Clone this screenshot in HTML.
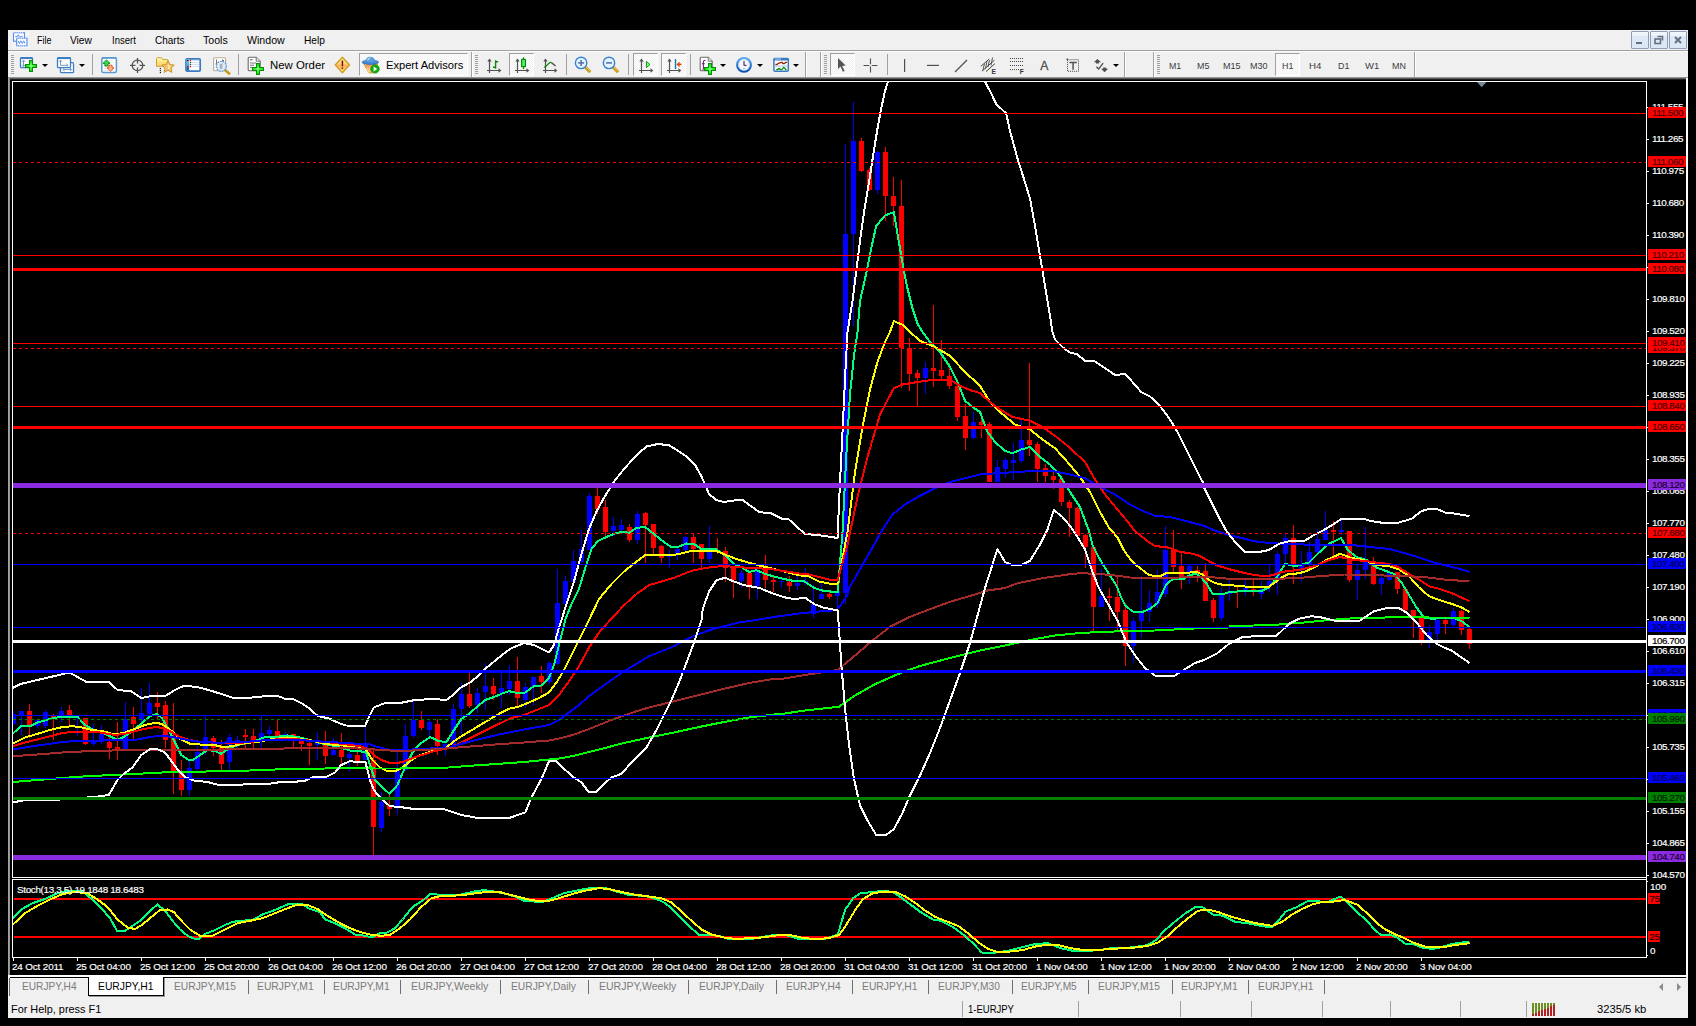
<!DOCTYPE html><html><head><meta charset="utf-8"><title>EURJPY,H1</title><style>
html,body{margin:0;padding:0;background:#000;}
body{width:1696px;height:1026px;position:relative;overflow:hidden;font-family:"Liberation Sans",sans-serif;font-size:11px;color:#000;}
.abs{position:absolute;}
#menubar{left:8px;top:30px;width:1680px;height:20px;background:#f0f0f0;}
#mline1{left:8px;top:50px;width:1680px;height:1px;background:#a0a0a0;}
#mline2{left:8px;top:51px;width:1680px;height:1px;background:#fcfcfc;}
#toolbar{left:8px;top:52px;width:1680px;height:25px;background:#f0f0f0;}
#tbshadow{left:8px;top:77px;width:1680px;height:3px;background:linear-gradient(#b4b4b4,#5a5a5a 50%,#000);}
#ledge{left:8px;top:78px;width:2px;height:897px;background:linear-gradient(90deg,#a8a8a8,#8c8c8c);}
#redge{left:1686px;top:78px;width:2px;height:897px;background:#fff;}
#tabbar{left:8px;top:975px;width:1680px;height:22px;background:#f0f0f0;border-top:2px solid #fff;box-sizing:border-box;}
#tabhi{left:10px;top:978px;width:1676px;height:1px;background:#fbfbfb;}
#tabtop{left:10px;top:977px;width:1676px;height:1px;background:#000;}
#status{left:8px;top:997px;width:1680px;height:21px;background:#f0f0f0;}
.mn{font-size:10.6px;}
.mi{position:absolute;top:34px;height:13px;line-height:13px;white-space:nowrap;font-size:11px;}
.tt{position:absolute;white-space:nowrap;line-height:13px;height:13px;transform-origin:0 0;}
.tab{color:#7b7b7b;top:980px;font-size:11px;}
.sep{position:absolute;width:1px;background:#a0a0a0;}
.sepw{position:absolute;width:1px;background:#fff;}
.grip{position:absolute;width:3px;height:20px;background:repeating-linear-gradient(#a0a0a0 0 1px,#f0f0f0 1px 2px);}
.pressed{position:absolute;box-sizing:border-box;border:1px solid;border-color:#a0a0a0 #fff #fff #a0a0a0;background:#f0f0f0 conic-gradient(#fff 25%,#f0f0f0 0 50%,#fff 0 75%,#f0f0f0 0) 0 0/2px 2px;}
.dd{position:absolute;width:0;height:0;border-left:3px solid transparent;border-right:3px solid transparent;border-top:3px solid #000;}
.per{position:absolute;top:59px;font-size:9.5px;color:#3c3c3c;line-height:13px;white-space:nowrap;}
.wb{position:absolute;top:31px;width:18px;height:18px;box-sizing:border-box;border:1px solid #8e9db3;background:linear-gradient(#f2f7fc 0,#eaf1fa 25%,#dde9f7 26%,#dbe7f5 100%);border-radius:1px;}
svg.ic{position:absolute;overflow:visible;}
</style></head><body>
<svg id="chart" width="1696" height="1026" viewBox="0 0 1696 1026" shape-rendering="crispEdges" style="position:absolute;left:0;top:0" font-family="Liberation Sans, sans-serif" font-size="9.9px" letter-spacing="-0.15" stroke-width="0.18" paint-order="stroke"><defs><clipPath id="cm"><rect x="13" y="82" width="1633" height="795"/></clipPath><clipPath id="cs"><rect x="13" y="880" width="1633" height="77"/></clipPath></defs><g clip-path="url(#cm)">
<rect x="13" y="711" width="1" height="14" fill="#0000ff"/><rect x="11" y="714" width="5" height="10" fill="#0000ff"/>
<rect x="21" y="711" width="1" height="24" fill="#0000ff"/><rect x="19" y="711" width="5" height="5" fill="#0000ff"/>
<rect x="29" y="704" width="1" height="34" fill="#ff0000"/><rect x="27" y="711" width="5" height="14" fill="#ff0000"/>
<rect x="37" y="719" width="1" height="9" fill="#0000ff"/><rect x="35" y="720" width="5" height="6" fill="#0000ff"/>
<rect x="45" y="710" width="1" height="18" fill="#0000ff"/><rect x="43" y="712" width="5" height="14" fill="#0000ff"/>
<rect x="53" y="714" width="1" height="26" fill="#ff0000"/><rect x="51" y="715" width="5" height="4" fill="#ff0000"/>
<rect x="61" y="707" width="1" height="15" fill="#0000ff"/><rect x="59" y="711" width="5" height="7" fill="#0000ff"/>
<rect x="69" y="705" width="1" height="20" fill="#ff0000"/><rect x="67" y="710" width="5" height="6" fill="#ff0000"/>
<rect x="77" y="716" width="1" height="20" fill="#0000ff"/><rect x="75" y="717" width="5" height="1" fill="#0000ff"/>
<rect x="85" y="718" width="1" height="27" fill="#ff0000"/><rect x="83" y="718" width="5" height="26" fill="#ff0000"/>
<rect x="93" y="724" width="1" height="22" fill="#0000ff"/><rect x="91" y="740" width="5" height="4" fill="#0000ff"/>
<rect x="101" y="725" width="1" height="19" fill="#0000ff"/><rect x="99" y="734" width="5" height="8" fill="#0000ff"/>
<rect x="109" y="735" width="1" height="24" fill="#ff0000"/><rect x="107" y="742" width="5" height="6" fill="#ff0000"/>
<rect x="117" y="722" width="1" height="38" fill="#ff0000"/><rect x="115" y="747" width="5" height="4" fill="#ff0000"/>
<rect x="125" y="702" width="1" height="48" fill="#0000ff"/><rect x="123" y="719" width="5" height="31" fill="#0000ff"/>
<rect x="133" y="707" width="1" height="32" fill="#ff0000"/><rect x="131" y="717" width="5" height="7" fill="#ff0000"/>
<rect x="141" y="688" width="1" height="42" fill="#0000ff"/><rect x="139" y="713" width="5" height="7" fill="#0000ff"/>
<rect x="149" y="683" width="1" height="32" fill="#0000ff"/><rect x="147" y="703" width="5" height="11" fill="#0000ff"/>
<rect x="157" y="692" width="1" height="28" fill="#ff0000"/><rect x="155" y="703" width="5" height="4" fill="#ff0000"/>
<rect x="165" y="701" width="1" height="47" fill="#ff0000"/><rect x="163" y="705" width="5" height="35" fill="#ff0000"/>
<rect x="173" y="703" width="1" height="91" fill="#ff0000"/><rect x="171" y="738" width="5" height="34" fill="#ff0000"/>
<rect x="181" y="760" width="1" height="36" fill="#ff0000"/><rect x="179" y="772" width="5" height="18" fill="#ff0000"/>
<rect x="189" y="760" width="1" height="36" fill="#0000ff"/><rect x="187" y="768" width="5" height="22" fill="#0000ff"/>
<rect x="197" y="746" width="1" height="25" fill="#0000ff"/><rect x="195" y="752" width="5" height="17" fill="#0000ff"/>
<rect x="205" y="715" width="1" height="40" fill="#0000ff"/><rect x="203" y="737" width="5" height="12" fill="#0000ff"/>
<rect x="213" y="736" width="1" height="20" fill="#ff0000"/><rect x="211" y="738" width="5" height="10" fill="#ff0000"/>
<rect x="221" y="740" width="1" height="30" fill="#ff0000"/><rect x="219" y="746" width="5" height="18" fill="#ff0000"/>
<rect x="229" y="734" width="1" height="36" fill="#0000ff"/><rect x="227" y="737" width="5" height="25" fill="#0000ff"/>
<rect x="237" y="736" width="1" height="14" fill="#0000ff"/><rect x="235" y="740" width="5" height="2" fill="#0000ff"/>
<rect x="245" y="729" width="1" height="19" fill="#ff0000"/><rect x="243" y="735" width="5" height="2" fill="#ff0000"/>
<rect x="253" y="729" width="1" height="19" fill="#ff0000"/><rect x="251" y="736" width="5" height="4" fill="#ff0000"/>
<rect x="261" y="715" width="1" height="33" fill="#0000ff"/><rect x="259" y="733" width="5" height="6" fill="#0000ff"/>
<rect x="269" y="726" width="1" height="10" fill="#0000ff"/><rect x="267" y="730" width="5" height="4" fill="#0000ff"/>
<rect x="277" y="720" width="1" height="18" fill="#ff0000"/><rect x="275" y="731" width="5" height="5" fill="#ff0000"/>
<rect x="285" y="732" width="1" height="7" fill="#0000ff"/><rect x="283" y="734" width="5" height="2" fill="#0000ff"/>
<rect x="293" y="734" width="1" height="14" fill="#ff0000"/><rect x="291" y="734" width="5" height="4" fill="#ff0000"/>
<rect x="301" y="738" width="1" height="13" fill="#ff0000"/><rect x="299" y="741" width="5" height="3" fill="#ff0000"/>
<rect x="309" y="742" width="1" height="23" fill="#ff0000"/><rect x="307" y="743" width="5" height="3" fill="#ff0000"/>
<rect x="317" y="732" width="1" height="28" fill="#0000ff"/><rect x="315" y="742" width="5" height="3" fill="#0000ff"/>
<rect x="325" y="731" width="1" height="33" fill="#ff0000"/><rect x="323" y="743" width="5" height="13" fill="#ff0000"/>
<rect x="333" y="738" width="1" height="18" fill="#0000ff"/><rect x="331" y="750" width="5" height="5" fill="#0000ff"/>
<rect x="341" y="733" width="1" height="31" fill="#ff0000"/><rect x="339" y="750" width="5" height="7" fill="#ff0000"/>
<rect x="349" y="752" width="1" height="20" fill="#0000ff"/><rect x="347" y="754" width="5" height="4" fill="#0000ff"/>
<rect x="357" y="745" width="1" height="21" fill="#ff0000"/><rect x="355" y="755" width="5" height="6" fill="#ff0000"/>
<rect x="365" y="726" width="1" height="34" fill="#0000ff"/><rect x="363" y="744" width="5" height="16" fill="#0000ff"/>
<rect x="373" y="749" width="1" height="106" fill="#ff0000"/><rect x="371" y="760" width="5" height="67" fill="#ff0000"/>
<rect x="381" y="792" width="1" height="40" fill="#0000ff"/><rect x="379" y="802" width="5" height="26" fill="#0000ff"/>
<rect x="389" y="792" width="1" height="24" fill="#ff0000"/><rect x="387" y="805" width="5" height="4" fill="#ff0000"/>
<rect x="397" y="752" width="1" height="63" fill="#0000ff"/><rect x="395" y="770" width="5" height="38" fill="#0000ff"/>
<rect x="405" y="724" width="1" height="47" fill="#0000ff"/><rect x="403" y="736" width="5" height="34" fill="#0000ff"/>
<rect x="413" y="700" width="1" height="38" fill="#0000ff"/><rect x="411" y="720" width="5" height="16" fill="#0000ff"/>
<rect x="421" y="711" width="1" height="19" fill="#ff0000"/><rect x="419" y="720" width="5" height="8" fill="#ff0000"/>
<rect x="429" y="720" width="1" height="18" fill="#0000ff"/><rect x="427" y="722" width="5" height="8" fill="#0000ff"/>
<rect x="437" y="719" width="1" height="36" fill="#ff0000"/><rect x="435" y="724" width="5" height="22" fill="#ff0000"/>
<rect x="445" y="740" width="1" height="16" fill="#0000ff"/><rect x="443" y="744" width="5" height="5" fill="#0000ff"/>
<rect x="453" y="704" width="1" height="41" fill="#0000ff"/><rect x="451" y="709" width="5" height="36" fill="#0000ff"/>
<rect x="461" y="683" width="1" height="51" fill="#0000ff"/><rect x="459" y="694" width="5" height="15" fill="#0000ff"/>
<rect x="469" y="673" width="1" height="35" fill="#ff0000"/><rect x="467" y="694" width="5" height="12" fill="#ff0000"/>
<rect x="477" y="688" width="1" height="25" fill="#0000ff"/><rect x="475" y="693" width="5" height="12" fill="#0000ff"/>
<rect x="485" y="663" width="1" height="47" fill="#0000ff"/><rect x="483" y="686" width="5" height="6" fill="#0000ff"/>
<rect x="493" y="678" width="1" height="22" fill="#ff0000"/><rect x="491" y="686" width="5" height="8" fill="#ff0000"/>
<rect x="501" y="672" width="1" height="36" fill="#0000ff"/><rect x="499" y="688" width="5" height="5" fill="#0000ff"/>
<rect x="509" y="665" width="1" height="30" fill="#0000ff"/><rect x="507" y="681" width="5" height="8" fill="#0000ff"/>
<rect x="517" y="657" width="1" height="49" fill="#ff0000"/><rect x="515" y="681" width="5" height="17" fill="#ff0000"/>
<rect x="525" y="683" width="1" height="25" fill="#0000ff"/><rect x="523" y="687" width="5" height="13" fill="#0000ff"/>
<rect x="533" y="676" width="1" height="30" fill="#0000ff"/><rect x="531" y="677" width="5" height="10" fill="#0000ff"/>
<rect x="541" y="666" width="1" height="27" fill="#ff0000"/><rect x="539" y="676" width="5" height="6" fill="#ff0000"/>
<rect x="549" y="661" width="1" height="23" fill="#0000ff"/><rect x="547" y="663" width="5" height="19" fill="#0000ff"/>
<rect x="557" y="569" width="1" height="96" fill="#0000ff"/><rect x="555" y="603" width="5" height="61" fill="#0000ff"/>
<rect x="565" y="576" width="1" height="29" fill="#0000ff"/><rect x="563" y="581" width="5" height="23" fill="#0000ff"/>
<rect x="573" y="550" width="1" height="33" fill="#0000ff"/><rect x="571" y="561" width="5" height="21" fill="#0000ff"/>
<rect x="581" y="530" width="1" height="33" fill="#0000ff"/><rect x="579" y="549" width="5" height="13" fill="#0000ff"/>
<rect x="589" y="493" width="1" height="57" fill="#0000ff"/><rect x="587" y="496" width="5" height="54" fill="#0000ff"/>
<rect x="597" y="488" width="1" height="26" fill="#ff0000"/><rect x="595" y="496" width="5" height="13" fill="#ff0000"/>
<rect x="605" y="500" width="1" height="36" fill="#ff0000"/><rect x="603" y="507" width="5" height="25" fill="#ff0000"/>
<rect x="613" y="517" width="1" height="19" fill="#0000ff"/><rect x="611" y="526" width="5" height="5" fill="#0000ff"/>
<rect x="621" y="519" width="1" height="13" fill="#0000ff"/><rect x="619" y="525" width="5" height="5" fill="#0000ff"/>
<rect x="629" y="524" width="1" height="18" fill="#ff0000"/><rect x="627" y="527" width="5" height="13" fill="#ff0000"/>
<rect x="637" y="511" width="1" height="33" fill="#0000ff"/><rect x="635" y="514" width="5" height="26" fill="#0000ff"/>
<rect x="645" y="512" width="1" height="51" fill="#ff0000"/><rect x="643" y="513" width="5" height="12" fill="#ff0000"/>
<rect x="653" y="524" width="1" height="30" fill="#ff0000"/><rect x="651" y="524" width="5" height="24" fill="#ff0000"/>
<rect x="661" y="545" width="1" height="18" fill="#ff0000"/><rect x="659" y="546" width="5" height="12" fill="#ff0000"/>
<rect x="669" y="550" width="1" height="18" fill="#0000ff"/><rect x="667" y="555" width="5" height="2" fill="#0000ff"/>
<rect x="677" y="548" width="1" height="12" fill="#0000ff"/><rect x="675" y="549" width="5" height="5" fill="#0000ff"/>
<rect x="685" y="536" width="1" height="16" fill="#0000ff"/><rect x="683" y="537" width="5" height="13" fill="#0000ff"/>
<rect x="693" y="534" width="1" height="29" fill="#ff0000"/><rect x="691" y="537" width="5" height="12" fill="#ff0000"/>
<rect x="701" y="544" width="1" height="24" fill="#ff0000"/><rect x="699" y="544" width="5" height="15" fill="#ff0000"/>
<rect x="709" y="526" width="1" height="37" fill="#0000ff"/><rect x="707" y="552" width="5" height="7" fill="#0000ff"/>
<rect x="717" y="538" width="1" height="16" fill="#ff0000"/><rect x="715" y="550" width="5" height="2" fill="#ff0000"/>
<rect x="725" y="547" width="1" height="35" fill="#ff0000"/><rect x="723" y="551" width="5" height="17" fill="#ff0000"/>
<rect x="733" y="566" width="1" height="32" fill="#ff0000"/><rect x="731" y="568" width="5" height="12" fill="#ff0000"/>
<rect x="741" y="570" width="1" height="18" fill="#0000ff"/><rect x="739" y="573" width="5" height="8" fill="#0000ff"/>
<rect x="749" y="572" width="1" height="27" fill="#ff0000"/><rect x="747" y="573" width="5" height="13" fill="#ff0000"/>
<rect x="757" y="564" width="1" height="35" fill="#0000ff"/><rect x="755" y="571" width="5" height="15" fill="#0000ff"/>
<rect x="765" y="555" width="1" height="33" fill="#ff0000"/><rect x="763" y="568" width="5" height="12" fill="#ff0000"/>
<rect x="773" y="576" width="1" height="16" fill="#ff0000"/><rect x="771" y="580" width="5" height="2" fill="#ff0000"/>
<rect x="781" y="579" width="1" height="9" fill="#0000ff"/><rect x="779" y="581" width="5" height="1" fill="#0000ff"/>
<rect x="789" y="576" width="1" height="16" fill="#ff0000"/><rect x="787" y="582" width="5" height="4" fill="#ff0000"/>
<rect x="797" y="575" width="1" height="15" fill="#0000ff"/><rect x="795" y="583" width="5" height="3" fill="#0000ff"/>
<rect x="805" y="568" width="1" height="17" fill="#0000ff"/><rect x="803" y="581" width="5" height="2" fill="#0000ff"/>
<rect x="813" y="585" width="1" height="33" fill="#0000ff"/><rect x="811" y="604" width="5" height="10" fill="#0000ff"/>
<rect x="821" y="583" width="1" height="16" fill="#0000ff"/><rect x="819" y="594" width="5" height="5" fill="#0000ff"/>
<rect x="829" y="592" width="1" height="7" fill="#ff0000"/><rect x="827" y="594" width="5" height="3" fill="#ff0000"/>
<rect x="837" y="589" width="1" height="23" fill="#0000ff"/><rect x="835" y="591" width="5" height="5" fill="#0000ff"/>
<rect x="845" y="144" width="1" height="460" fill="#0000ff"/><rect x="843" y="234" width="5" height="359" fill="#0000ff"/>
<rect x="853" y="102" width="1" height="224" fill="#0000ff"/><rect x="851" y="141" width="5" height="93" fill="#0000ff"/>
<rect x="861" y="138" width="1" height="34" fill="#ff0000"/><rect x="859" y="141" width="5" height="30" fill="#ff0000"/>
<rect x="869" y="168" width="1" height="23" fill="#ff0000"/><rect x="867" y="170" width="5" height="20" fill="#ff0000"/>
<rect x="877" y="151" width="1" height="43" fill="#0000ff"/><rect x="875" y="152" width="5" height="38" fill="#0000ff"/>
<rect x="885" y="147" width="1" height="74" fill="#ff0000"/><rect x="883" y="152" width="5" height="44" fill="#ff0000"/>
<rect x="893" y="177" width="1" height="49" fill="#ff0000"/><rect x="891" y="196" width="5" height="10" fill="#ff0000"/>
<rect x="901" y="180" width="1" height="208" fill="#ff0000"/><rect x="899" y="206" width="5" height="142" fill="#ff0000"/>
<rect x="909" y="338" width="1" height="53" fill="#ff0000"/><rect x="907" y="348" width="5" height="26" fill="#ff0000"/>
<rect x="917" y="370" width="1" height="36" fill="#ff0000"/><rect x="915" y="373" width="5" height="5" fill="#ff0000"/>
<rect x="925" y="362" width="1" height="32" fill="#0000ff"/><rect x="923" y="368" width="5" height="10" fill="#0000ff"/>
<rect x="933" y="305" width="1" height="82" fill="#ff0000"/><rect x="931" y="368" width="5" height="3" fill="#ff0000"/>
<rect x="941" y="340" width="1" height="40" fill="#ff0000"/><rect x="939" y="370" width="5" height="6" fill="#ff0000"/>
<rect x="949" y="363" width="1" height="26" fill="#ff0000"/><rect x="947" y="376" width="5" height="10" fill="#ff0000"/>
<rect x="957" y="379" width="1" height="42" fill="#ff0000"/><rect x="955" y="386" width="5" height="31" fill="#ff0000"/>
<rect x="965" y="404" width="1" height="46" fill="#ff0000"/><rect x="963" y="416" width="5" height="22" fill="#ff0000"/>
<rect x="973" y="412" width="1" height="27" fill="#0000ff"/><rect x="971" y="422" width="5" height="16" fill="#0000ff"/>
<rect x="981" y="412" width="1" height="26" fill="#ff0000"/><rect x="979" y="422" width="5" height="3" fill="#ff0000"/>
<rect x="989" y="422" width="1" height="60" fill="#ff0000"/><rect x="987" y="424" width="5" height="58" fill="#ff0000"/>
<rect x="997" y="460" width="1" height="22" fill="#0000ff"/><rect x="995" y="467" width="5" height="15" fill="#0000ff"/>
<rect x="1005" y="458" width="1" height="20" fill="#0000ff"/><rect x="1003" y="460" width="5" height="9" fill="#0000ff"/>
<rect x="1013" y="443" width="1" height="37" fill="#0000ff"/><rect x="1011" y="460" width="5" height="3" fill="#0000ff"/>
<rect x="1021" y="418" width="1" height="45" fill="#0000ff"/><rect x="1019" y="440" width="5" height="21" fill="#0000ff"/>
<rect x="1029" y="363" width="1" height="93" fill="#ff0000"/><rect x="1027" y="440" width="5" height="5" fill="#ff0000"/>
<rect x="1037" y="442" width="1" height="40" fill="#ff0000"/><rect x="1035" y="444" width="5" height="25" fill="#ff0000"/>
<rect x="1045" y="464" width="1" height="18" fill="#ff0000"/><rect x="1043" y="468" width="5" height="8" fill="#ff0000"/>
<rect x="1053" y="472" width="1" height="17" fill="#ff0000"/><rect x="1051" y="476" width="5" height="4" fill="#ff0000"/>
<rect x="1061" y="478" width="1" height="28" fill="#ff0000"/><rect x="1059" y="479" width="5" height="23" fill="#ff0000"/>
<rect x="1069" y="500" width="1" height="37" fill="#ff0000"/><rect x="1067" y="502" width="5" height="6" fill="#ff0000"/>
<rect x="1077" y="507" width="1" height="30" fill="#ff0000"/><rect x="1075" y="508" width="5" height="28" fill="#ff0000"/>
<rect x="1085" y="534" width="1" height="34" fill="#ff0000"/><rect x="1083" y="535" width="5" height="12" fill="#ff0000"/>
<rect x="1093" y="546" width="1" height="86" fill="#ff0000"/><rect x="1091" y="547" width="5" height="60" fill="#ff0000"/>
<rect x="1101" y="569" width="1" height="38" fill="#0000ff"/><rect x="1099" y="596" width="5" height="11" fill="#0000ff"/>
<rect x="1109" y="588" width="1" height="33" fill="#ff0000"/><rect x="1107" y="596" width="5" height="2" fill="#ff0000"/>
<rect x="1117" y="577" width="1" height="54" fill="#ff0000"/><rect x="1115" y="597" width="5" height="15" fill="#ff0000"/>
<rect x="1125" y="603" width="1" height="63" fill="#ff0000"/><rect x="1123" y="610" width="5" height="36" fill="#ff0000"/>
<rect x="1133" y="618" width="1" height="45" fill="#0000ff"/><rect x="1131" y="621" width="5" height="25" fill="#0000ff"/>
<rect x="1141" y="576" width="1" height="62" fill="#0000ff"/><rect x="1139" y="613" width="5" height="8" fill="#0000ff"/>
<rect x="1149" y="590" width="1" height="32" fill="#0000ff"/><rect x="1147" y="603" width="5" height="9" fill="#0000ff"/>
<rect x="1157" y="570" width="1" height="38" fill="#0000ff"/><rect x="1155" y="592" width="5" height="12" fill="#0000ff"/>
<rect x="1165" y="526" width="1" height="71" fill="#0000ff"/><rect x="1163" y="550" width="5" height="44" fill="#0000ff"/>
<rect x="1173" y="530" width="1" height="42" fill="#ff0000"/><rect x="1171" y="549" width="5" height="18" fill="#ff0000"/>
<rect x="1181" y="551" width="1" height="38" fill="#ff0000"/><rect x="1179" y="566" width="5" height="11" fill="#ff0000"/>
<rect x="1189" y="565" width="1" height="19" fill="#0000ff"/><rect x="1187" y="566" width="5" height="6" fill="#0000ff"/>
<rect x="1197" y="566" width="1" height="16" fill="#ff0000"/><rect x="1195" y="570" width="5" height="2" fill="#ff0000"/>
<rect x="1205" y="563" width="1" height="38" fill="#ff0000"/><rect x="1203" y="571" width="5" height="30" fill="#ff0000"/>
<rect x="1213" y="598" width="1" height="24" fill="#ff0000"/><rect x="1211" y="600" width="5" height="18" fill="#ff0000"/>
<rect x="1221" y="588" width="1" height="33" fill="#0000ff"/><rect x="1219" y="595" width="5" height="23" fill="#0000ff"/>
<rect x="1229" y="580" width="1" height="21" fill="#0000ff"/><rect x="1227" y="591" width="5" height="3" fill="#0000ff"/>
<rect x="1237" y="587" width="1" height="21" fill="#ff0000"/><rect x="1235" y="591" width="5" height="1" fill="#ff0000"/>
<rect x="1245" y="580" width="1" height="16" fill="#0000ff"/><rect x="1243" y="588" width="5" height="3" fill="#0000ff"/>
<rect x="1253" y="580" width="1" height="16" fill="#ff0000"/><rect x="1251" y="589" width="5" height="3" fill="#ff0000"/>
<rect x="1261" y="581" width="1" height="18" fill="#0000ff"/><rect x="1259" y="589" width="5" height="5" fill="#0000ff"/>
<rect x="1269" y="565" width="1" height="27" fill="#0000ff"/><rect x="1267" y="581" width="5" height="5" fill="#0000ff"/>
<rect x="1277" y="551" width="1" height="44" fill="#0000ff"/><rect x="1275" y="554" width="5" height="26" fill="#0000ff"/>
<rect x="1285" y="534" width="1" height="30" fill="#0000ff"/><rect x="1283" y="538" width="5" height="16" fill="#0000ff"/>
<rect x="1293" y="525" width="1" height="59" fill="#ff0000"/><rect x="1291" y="538" width="5" height="27" fill="#ff0000"/>
<rect x="1301" y="551" width="1" height="31" fill="#0000ff"/><rect x="1299" y="564" width="5" height="5" fill="#0000ff"/>
<rect x="1309" y="542" width="1" height="24" fill="#0000ff"/><rect x="1307" y="552" width="5" height="13" fill="#0000ff"/>
<rect x="1317" y="529" width="1" height="25" fill="#0000ff"/><rect x="1315" y="539" width="5" height="13" fill="#0000ff"/>
<rect x="1325" y="511" width="1" height="29" fill="#0000ff"/><rect x="1323" y="530" width="5" height="10" fill="#0000ff"/>
<rect x="1333" y="521" width="1" height="35" fill="#ff0000"/><rect x="1331" y="530" width="5" height="2" fill="#ff0000"/>
<rect x="1341" y="520" width="1" height="15" fill="#0000ff"/><rect x="1339" y="530" width="5" height="2" fill="#0000ff"/>
<rect x="1349" y="531" width="1" height="51" fill="#ff0000"/><rect x="1347" y="531" width="5" height="49" fill="#ff0000"/>
<rect x="1357" y="565" width="1" height="35" fill="#0000ff"/><rect x="1355" y="570" width="5" height="10" fill="#0000ff"/>
<rect x="1365" y="527" width="1" height="52" fill="#0000ff"/><rect x="1363" y="561" width="5" height="9" fill="#0000ff"/>
<rect x="1373" y="557" width="1" height="28" fill="#ff0000"/><rect x="1371" y="561" width="5" height="23" fill="#ff0000"/>
<rect x="1381" y="576" width="1" height="19" fill="#0000ff"/><rect x="1379" y="578" width="5" height="6" fill="#0000ff"/>
<rect x="1389" y="571" width="1" height="10" fill="#0000ff"/><rect x="1387" y="572" width="5" height="8" fill="#0000ff"/>
<rect x="1397" y="572" width="1" height="22" fill="#ff0000"/><rect x="1395" y="572" width="5" height="17" fill="#ff0000"/>
<rect x="1405" y="588" width="1" height="24" fill="#ff0000"/><rect x="1403" y="589" width="5" height="21" fill="#ff0000"/>
<rect x="1413" y="610" width="1" height="28" fill="#ff0000"/><rect x="1411" y="610" width="5" height="8" fill="#ff0000"/>
<rect x="1421" y="616" width="1" height="29" fill="#ff0000"/><rect x="1419" y="616" width="5" height="24" fill="#ff0000"/>
<rect x="1429" y="625" width="1" height="23" fill="#0000ff"/><rect x="1427" y="632" width="5" height="8" fill="#0000ff"/>
<rect x="1437" y="619" width="1" height="21" fill="#0000ff"/><rect x="1435" y="620" width="5" height="14" fill="#0000ff"/>
<rect x="1445" y="618" width="1" height="16" fill="#ff0000"/><rect x="1443" y="620" width="5" height="4" fill="#ff0000"/>
<rect x="1453" y="608" width="1" height="19" fill="#0000ff"/><rect x="1451" y="611" width="5" height="14" fill="#0000ff"/>
<rect x="1461" y="610" width="1" height="25" fill="#ff0000"/><rect x="1459" y="611" width="5" height="19" fill="#ff0000"/>
<rect x="1469" y="628" width="1" height="21" fill="#ff0000"/><rect x="1467" y="629" width="5" height="15" fill="#ff0000"/>
<polyline points="12.5,733.8 21.2,726.2 30.0,726.2 37.5,722.5 46.2,720.0 53.8,718.0 61.2,716.8 77.5,716.8 85.0,725.0 93.8,730.0 102.5,732.5 110.0,736.2 117.5,740.0 125.0,736.2 133.8,730.0 142.5,722.5 150.0,716.2 157.0,713.8 162.5,718.8 168.8,730.0 175.0,742.5 181.2,755.0 188.8,760.0 193.8,759.5 200.0,755.0 207.5,750.0 215.0,751.2 221.2,753.8 228.8,748.8 237.5,745.0 247.5,743.0 257.5,740.0 265.0,737.0 275.0,737.0 287.5,735.5 300.0,737.5 310.0,740.0 320.0,743.0 330.0,745.0 340.0,747.5 350.0,750.5 360.0,751.2 366.2,752.5 370.0,765.0 375.0,780.0 382.5,787.5 389.5,793.8 397.5,785.0 405.0,767.5 412.5,752.5 420.0,743.8 424.0,741.2 430.2,737.0 439.0,741.2 446.5,742.0 454.0,730.0 461.5,718.8 469.0,713.8 477.8,706.2 485.2,700.0 494.0,697.0 501.5,693.8 509.0,691.2 517.8,693.0 525.2,692.5 534.0,686.2 541.5,685.5 549.0,678.0 554.0,665.0 559.0,645.0 565.2,620.0 571.5,604.0 579.0,589.0 586.5,564.0 591.5,549.0 597.8,541.0 606.5,537.0 616.5,532.8 624.0,532.0 629.0,532.8 636.5,527.8 645.2,527.0 654.0,534.0 661.5,540.2 670.2,546.5 679.0,546.5 686.5,543.5 694.0,544.0 701.5,549.0 716.5,549.5 726.5,556.5 734.0,564.0 741.5,567.0 749.0,572.0 756.5,570.2 765.2,574.0 774.0,576.5 784.0,579.0 794.0,581.0 804.0,581.0 814.0,587.8 824.0,591.0 835.5,591.9 837.8,591.9 842.5,532.0 846.2,457.0 850.0,394.5 853.8,357.0 857.5,332.0 860.0,301.0 866.2,273.5 871.2,248.5 876.2,226.0 885.0,215.5 893.8,212.2 896.2,226.0 900.0,248.5 903.8,271.0 907.5,288.5 912.5,308.5 917.5,323.5 922.5,332.0 930.0,342.0 940.0,352.0 950.0,367.0 957.5,382.0 965.0,400.8 972.5,407.0 980.0,412.0 987.5,432.0 995.0,442.0 1005.0,450.8 1012.5,453.2 1021.2,449.5 1030.0,447.0 1040.0,457.0 1050.0,464.5 1060.0,475.8 1070.0,492.0 1080.0,507.0 1087.5,527.0 1088.8,530.0 1092.5,545.0 1097.5,555.0 1102.5,563.8 1108.8,573.8 1116.2,585.0 1121.2,597.5 1125.0,605.0 1130.0,609.4 1133.8,611.9 1142.5,611.9 1150.0,608.8 1157.5,603.1 1162.5,592.5 1166.2,584.4 1172.5,579.4 1183.8,578.8 1190.0,575.0 1196.2,573.8 1201.2,577.5 1207.5,585.0 1212.5,593.8 1223.8,593.8 1230.0,591.9 1242.5,591.2 1255.0,590.6 1261.2,591.2 1267.5,588.1 1272.5,583.8 1277.5,576.2 1285.0,563.8 1292.0,565.6 1299.0,565.5 1309.0,562.5 1319.0,552.5 1329.0,543.8 1341.0,538.0 1347.8,550.0 1356.5,557.0 1366.5,560.0 1376.5,567.5 1386.5,571.2 1394.0,573.8 1401.5,582.5 1409.0,595.0 1416.5,607.5 1424.0,617.5 1431.5,618.8 1444.0,618.0 1454.0,618.0 1461.5,621.2 1469.5,627.0" fill="none" stroke="#00ff7f" stroke-width="2" stroke-linejoin="round"/>
<polyline points="12.5,743.8 25.0,737.5 37.5,733.8 50.0,730.0 62.5,727.0 72.5,726.2 80.0,727.0 90.0,729.5 102.5,731.2 115.0,734.5 125.0,732.5 135.0,728.8 145.0,725.0 156.2,722.5 162.5,724.5 170.0,729.5 180.0,738.8 190.0,743.8 200.0,744.5 212.5,744.5 222.5,747.0 232.5,746.2 245.0,743.0 257.5,742.0 270.0,739.5 287.5,737.5 300.0,738.8 315.0,741.2 325.0,743.8 337.5,745.0 350.0,746.2 360.0,748.0 366.2,750.0 372.5,760.0 380.0,767.5 387.5,771.2 395.0,771.2 402.5,767.5 410.0,761.2 417.5,756.2 424.0,753.8 431.5,751.2 446.5,747.5 454.0,741.2 461.5,736.2 474.0,728.8 486.5,721.2 499.0,713.8 509.0,708.8 517.8,707.0 529.0,702.5 539.0,698.0 549.0,692.5 556.5,682.5 564.0,670.0 574.0,650.0 581.5,635.0 589.0,620.0 599.0,599.0 611.5,584.0 624.0,571.5 636.5,561.5 645.2,555.2 659.0,555.2 676.5,554.5 691.5,551.0 704.0,551.0 716.5,551.0 726.5,555.2 736.5,559.0 749.0,562.8 761.5,566.0 774.0,569.0 786.5,572.0 799.0,575.2 809.0,576.5 819.0,581.5 829.0,583.5 837.6,583.8 847.5,532.0 855.0,472.0 862.5,427.0 870.0,389.5 877.5,362.0 885.0,342.0 890.0,332.0 893.8,321.0 902.5,324.8 910.0,332.0 920.0,340.8 935.0,347.0 950.0,355.8 965.0,372.0 980.0,385.8 990.0,402.0 1000.0,412.0 1015.0,424.5 1030.0,429.5 1042.5,439.5 1055.0,448.2 1067.5,462.0 1080.0,477.0 1090.0,492.0 1100.0,512.0 1110.0,529.5 1111.2,530.0 1117.5,537.5 1123.8,550.0 1130.0,558.8 1136.2,565.0 1142.5,570.0 1148.8,575.0 1155.0,576.0 1161.2,575.6 1166.2,573.1 1180.0,573.1 1190.0,572.5 1196.2,571.9 1202.5,574.4 1208.8,580.0 1215.0,583.1 1223.8,585.0 1236.2,585.6 1248.8,586.9 1261.2,586.9 1268.8,586.9 1275.0,582.5 1282.5,576.9 1287.5,574.4 1292.0,574.4 1304.0,572.0 1314.0,567.5 1326.5,560.0 1340.2,553.8 1351.5,558.0 1364.0,560.0 1376.5,565.0 1389.0,566.2 1399.0,569.5 1409.0,576.2 1419.0,587.5 1429.0,596.2 1439.0,600.0 1451.5,603.8 1461.5,607.5 1469.5,612.0" fill="none" stroke="#ffff00" stroke-width="2" stroke-linejoin="round"/>
<polyline points="12.5,746.2 25.0,742.5 37.5,739.5 50.0,736.2 62.5,733.0 72.5,732.0 85.0,732.0 100.0,732.5 115.0,735.0 125.0,733.8 135.0,731.2 145.0,728.8 156.2,727.0 162.5,728.0 170.0,731.2 180.0,737.0 190.0,740.0 200.0,741.8 212.5,742.5 225.0,743.0 237.5,743.0 250.0,742.0 262.5,740.5 275.0,739.5 287.5,738.8 300.0,739.5 315.0,741.2 330.0,742.5 345.0,744.2 360.0,746.2 367.5,748.8 375.0,756.2 382.5,760.5 390.0,763.0 397.5,763.0 405.0,761.2 415.0,757.0 424.0,754.5 431.5,752.0 439.0,750.0 449.0,748.0 461.5,742.5 474.0,736.2 486.5,730.0 499.0,723.8 511.5,718.0 524.0,715.0 536.5,710.0 549.0,705.0 559.0,695.0 569.0,681.2 579.0,666.2 589.0,647.5 599.0,632.5 610.2,620.0 624.0,605.2 636.5,594.0 649.0,585.2 661.5,581.5 674.0,577.8 686.5,572.8 694.0,570.2 711.5,567.0 724.0,566.0 736.5,567.0 749.0,567.8 761.5,568.5 774.0,569.5 786.5,571.5 799.0,573.5 809.0,574.5 819.0,577.0 829.0,579.5 837.6,580.6 847.5,544.5 857.5,497.0 867.5,457.0 880.0,414.5 893.8,388.2 902.5,384.5 917.5,382.0 935.0,379.5 950.0,379.5 960.0,385.8 970.0,390.0 980.0,393.2 990.0,402.0 1000.0,409.5 1012.5,417.0 1030.0,420.8 1042.5,427.0 1055.0,435.8 1067.5,445.8 1085.0,462.0 1095.0,479.5 1105.0,494.5 1117.5,509.5 1130.0,524.5 1133.8,530.0 1140.0,535.0 1147.5,541.2 1155.0,546.2 1165.0,546.9 1172.5,548.8 1180.0,551.9 1188.8,553.1 1197.5,555.0 1205.0,558.8 1212.5,563.1 1217.5,565.6 1230.0,569.4 1242.5,572.5 1255.0,575.2 1267.5,576.2 1275.0,574.4 1282.5,571.9 1292.0,570.6 1299.0,570.0 1314.0,566.2 1329.0,560.0 1340.2,557.0 1351.5,559.5 1366.5,561.2 1379.0,563.0 1389.0,563.8 1399.0,567.5 1409.0,573.8 1419.0,579.5 1429.0,586.2 1439.0,588.8 1451.5,593.0 1461.5,597.5 1469.5,601.2" fill="none" stroke="#ff0000" stroke-width="2" stroke-linejoin="round"/>
<polyline points="12.5,749.5 25.0,747.5 37.5,745.5 50.0,743.8 62.5,742.0 75.0,741.0 87.5,741.0 100.0,740.5 112.5,740.0 125.0,740.5 137.5,739.5 150.0,737.0 162.5,735.5 175.0,737.5 187.5,740.0 200.0,742.0 212.5,742.5 225.0,742.5 237.5,742.0 250.0,741.5 262.5,740.5 275.0,740.0 287.5,739.5 300.0,740.0 315.0,741.2 330.0,742.0 345.0,743.0 360.0,743.8 367.5,743.8 375.0,746.2 385.0,748.8 390.0,750.0 400.0,750.0 412.5,749.5 424.0,748.8 449.0,747.5 461.5,743.8 474.0,740.5 499.0,734.5 524.0,729.5 549.0,725.0 559.0,720.0 569.0,712.5 579.0,705.0 589.0,696.2 599.0,688.8 611.5,680.0 624.0,671.2 636.5,663.8 649.0,656.2 661.5,651.2 674.0,646.2 686.5,639.5 699.0,633.8 711.5,629.5 724.0,626.2 739.0,622.5 756.5,620.0 774.0,617.0 799.0,613.5 824.0,611.0 836.5,610.2 841.5,604.0 848.0,594.0 849.2,588.0 858.4,572.0 871.4,549.5 882.5,529.5 892.5,514.5 905.0,504.5 920.0,495.8 935.0,488.2 950.0,482.0 965.0,478.2 980.0,474.5 997.5,473.2 1017.5,472.0 1035.0,470.8 1055.0,471.5 1070.0,474.5 1085.0,478.2 1100.0,487.0 1115.0,494.5 1130.0,504.5 1142.5,510.8 1155.0,515.8 1170.0,517.0 1185.0,520.8 1204.0,525.8 1216.5,531.2 1229.0,535.0 1241.5,538.0 1254.0,541.2 1269.0,543.0 1284.0,543.8 1304.0,544.5 1324.0,544.5 1344.0,544.5 1364.0,546.2 1379.0,548.0 1389.0,548.8 1404.0,553.0 1419.0,557.5 1434.0,562.5 1449.0,566.2 1461.5,569.5 1469.5,572.0" fill="none" stroke="#0000ff" stroke-width="2" stroke-linejoin="round"/>
<polyline points="12.5,756.2 37.5,754.5 62.5,752.5 87.5,751.2 112.5,750.5 137.5,750.0 162.5,749.5 187.5,750.0 225.0,749.5 275.0,748.8 300.0,748.0 325.0,747.5 350.0,748.0 375.0,749.5 390.0,750.5 412.5,750.5 424.0,750.0 449.0,748.2 474.0,746.2 499.0,744.2 524.0,742.5 549.0,740.5 561.5,738.0 574.0,734.5 586.5,730.0 599.0,725.0 611.5,720.0 624.0,715.5 636.5,711.2 649.0,707.5 661.5,704.5 674.0,701.2 699.0,695.0 724.0,688.8 749.0,683.0 774.0,678.8 780.0,679.2 805.0,675.0 837.5,670.0 855.0,655.5 872.5,640.5 890.0,626.8 910.0,616.8 930.0,609.2 950.0,601.8 970.0,596.0 987.5,590.5 1005.0,588.0 1017.5,583.2 1042.5,578.2 1067.5,574.5 1080.0,573.2 1100.0,574.0 1117.5,575.8 1130.0,577.5 1155.0,578.2 1180.0,577.5 1204.0,576.5 1229.0,578.8 1254.0,579.0 1279.0,578.8 1304.0,577.5 1329.0,575.5 1344.0,574.5 1364.0,575.0 1384.0,575.5 1404.0,576.2 1424.0,577.0 1444.0,579.5 1461.5,580.8 1469.5,581.2" fill="none" stroke="#a52a2a" stroke-width="2" stroke-linejoin="round"/>
<polyline points="12.5,782.0 37.5,780.0 62.5,778.0 87.5,776.2 112.5,775.0 137.5,773.8 162.5,772.5 187.5,771.8 225.0,771.2 250.0,770.5 275.0,769.5 300.0,768.8 325.0,768.5 350.0,768.2 375.0,768.5 400.0,768.5 424.0,768.0 449.0,767.5 474.0,765.5 499.0,763.8 524.0,762.0 549.0,759.5 561.5,758.2 574.0,755.8 599.0,749.5 624.0,743.0 649.0,737.5 674.0,732.5 699.0,727.0 724.0,722.0 749.0,717.5 774.0,714.5 780.0,714.2 805.0,710.5 838.8,706.8 855.0,695.5 875.0,684.2 897.5,674.2 920.0,666.0 950.0,658.0 980.0,650.5 1005.0,645.5 1030.0,640.0 1055.0,635.5 1080.0,633.0 1105.0,631.8 1130.0,631.0 1155.0,630.5 1180.0,629.2 1204.0,628.0 1229.0,627.5 1230.2,626.2 1254.0,625.5 1279.0,624.5 1304.0,622.5 1329.0,620.0 1354.0,618.2 1379.0,618.0 1391.5,617.0 1404.0,617.0 1429.0,617.5 1454.0,617.5 1469.5,618.0" fill="none" stroke="#00ff00" stroke-width="2" stroke-linejoin="round"/>
<polyline points="12.5,688.0 21.2,683.8 37.5,680.0 53.8,676.2 66.2,673.2 71.2,673.5 86.2,681.8 108.8,681.8 117.5,690.0 131.2,691.2 141.2,698.0 152.5,695.8 166.2,695.5 175.0,690.0 183.8,685.8 197.5,687.0 212.5,691.2 233.8,698.0 246.2,698.0 257.5,697.0 271.2,695.5 277.5,695.8 285.0,698.8 293.8,699.5 302.5,703.8 308.8,708.0 317.5,715.8 330.0,718.8 338.8,723.0 346.2,725.5 365.0,726.0 368.8,717.5 373.8,707.5 385.0,703.0 400.0,703.0 412.5,700.5 424.0,699.5 434.0,699.0 446.5,700.0 452.8,695.0 461.5,687.0 470.2,682.5 477.8,676.2 485.2,668.8 499.0,657.5 510.2,648.8 524.0,643.0 534.0,645.0 541.5,648.8 549.0,652.5 554.0,645.0 559.0,627.5 561.5,620.0 566.5,604.0 574.0,581.5 581.5,554.0 589.0,529.0 596.5,511.5 604.0,497.8 614.0,481.5 624.0,469.0 636.5,455.2 646.5,446.5 657.8,444.0 669.0,445.2 679.0,451.5 686.5,456.5 695.2,465.2 701.5,476.5 709.0,494.0 716.5,500.2 724.0,502.0 736.5,500.2 742.8,500.2 751.5,506.5 759.0,512.0 771.5,513.5 781.5,518.5 789.0,519.5 796.5,526.5 805.2,534.0 819.0,535.2 836.5,537.8 837.5,538.2 840.0,482.0 842.5,432.0 845.5,369.5 847.5,332.0 852.5,301.0 856.2,271.0 860.0,241.0 865.0,206.0 870.0,176.0 873.8,151.0 877.5,128.5 881.2,108.5 885.0,91.0 888.0,81.5 891.2,66.0" fill="none" stroke="#ffffff" stroke-width="2" stroke-linejoin="round"/>
<polyline points="980.0,71.0 985.0,81.5 991.2,93.5 996.2,104.0 1006.2,113.5 1010.0,131.0 1017.5,158.5 1023.8,178.5 1030.0,198.5 1035.0,226.0 1040.0,256.0 1045.0,286.0 1050.0,316.0 1052.5,332.0 1055.0,339.5 1063.8,348.2 1070.0,352.5 1077.5,354.5 1085.0,360.8 1095.0,361.5 1105.0,368.2 1115.0,375.0 1125.0,374.0 1132.5,382.0 1141.2,392.0 1150.0,396.5 1160.0,405.8 1170.0,419.5 1177.5,432.0 1185.0,447.0 1192.5,462.0 1200.0,477.0 1204.0,484.5 1204.0,487.5 1211.5,502.5 1219.0,517.5 1226.5,531.2 1236.5,543.8 1245.2,552.0 1259.0,552.0 1269.0,550.0 1279.0,543.8 1289.0,541.2 1304.0,541.2 1314.0,535.0 1324.0,530.0 1334.0,523.8 1341.5,518.8 1364.0,518.8 1371.5,521.2 1384.0,523.0 1399.0,522.5 1411.5,518.8 1421.5,511.2 1429.0,508.8 1436.5,508.8 1445.2,512.5 1456.5,513.8 1469.5,516.2" fill="none" stroke="#ffffff" stroke-width="2" stroke-linejoin="round"/>
<polyline points="12.5,802.5 22.5,800.5 53.8,800.0 96.2,796.8 108.8,795.0 117.5,780.0 122.5,775.0 132.5,767.5 141.2,755.0 150.0,749.2 157.5,749.2 165.0,752.5 172.5,762.5 178.8,771.2 185.0,777.0 193.8,780.5 207.5,782.0 218.8,785.0 237.5,785.0 250.0,783.8 268.8,783.8 277.5,782.5 303.8,781.2 312.5,777.5 326.2,777.0 335.0,772.5 341.2,765.0 350.0,761.2 357.5,762.0 365.5,762.5 370.0,780.0 373.8,790.0 382.5,800.0 390.0,806.2 400.0,807.0 412.5,808.8 424.0,809.2 444.0,809.2 461.5,815.0 477.8,818.0 509.0,818.0 525.2,812.5 531.5,797.5 541.5,778.8 549.0,761.2 556.0,761.2 564.0,768.8 574.0,777.5 581.5,782.5 589.0,792.5 596.5,792.0 604.0,783.8 611.5,777.5 621.5,773.8 631.5,762.5 646.5,747.5 656.5,730.0 664.0,715.0 671.5,700.0 679.0,682.5 686.5,662.5 694.0,642.5 701.5,620.0 702.8,609.0 709.0,591.5 716.5,580.2 725.2,577.8 734.0,581.5 744.0,585.2 759.0,587.8 774.0,594.0 786.5,597.8 794.0,599.0 805.2,597.8 814.0,604.0 824.0,607.8 836.5,610.2 837.5,610.0 838.8,625.5 841.2,663.0 845.0,708.0 848.8,743.0 853.8,778.0 860.0,805.5 867.5,820.5 876.2,835.0 886.2,835.0 893.8,829.2 902.5,813.0 910.0,795.5 920.0,775.5 930.0,753.0 940.0,728.0 950.0,700.5 960.0,673.0 970.0,643.0 977.5,615.5 985.0,588.0 992.5,564.5 997.5,549.0 1005.0,562.0 1012.5,565.0 1021.2,565.0 1030.0,560.8 1040.0,544.5 1047.5,529.5 1053.8,510.0 1062.5,517.0 1070.0,525.8 1077.5,537.0 1085.0,549.5 1092.5,572.0 1098.8,588.0 1107.5,603.0 1117.5,620.5 1126.2,641.8 1135.0,655.5 1145.0,668.0 1155.0,675.5 1175.0,675.5 1185.0,669.2 1195.0,663.0 1204.0,660.0 1216.5,653.8 1229.0,643.8 1241.5,637.5 1254.0,636.2 1276.5,635.8 1289.0,623.8 1299.0,618.8 1311.5,616.2 1321.5,617.5 1334.0,620.5 1349.0,621.2 1360.2,620.5 1374.0,611.2 1389.0,607.5 1397.8,607.5 1406.5,612.5 1416.5,622.5 1426.5,635.0 1436.5,643.8 1444.0,647.5 1451.5,650.5 1461.5,657.5 1469.5,663.0" fill="none" stroke="#ffffff" stroke-width="2" stroke-linejoin="round"/>
<rect x="13" y="113" width="1633" height="1" fill="#ff0000"/>
<line x1="13" x2="1646" y1="162.5" y2="162.5" stroke="#ff0000" stroke-width="1" stroke-dasharray="3 3"/>
<rect x="13" y="255" width="1633" height="1" fill="#ff0000"/>
<rect x="13" y="268" width="1633" height="3" fill="#ff0000"/>
<rect x="13" y="343" width="1633" height="1" fill="#ff0000"/>
<line x1="13" x2="1646" y1="348.5" y2="348.5" stroke="#ff0000" stroke-width="1" stroke-dasharray="3 3"/>
<rect x="13" y="406" width="1633" height="1" fill="#ff0000"/>
<rect x="13" y="426" width="1633" height="3" fill="#ff0000"/>
<rect x="13" y="483" width="1633" height="5" fill="#8a2be2"/>
<line x1="13" x2="1646" y1="533.5" y2="533.5" stroke="#ff0000" stroke-width="1" stroke-dasharray="3 3"/>
<rect x="13" y="564" width="1633" height="1" fill="#0000ff"/>
<rect x="13" y="627" width="1633" height="1" fill="#0000ff"/>
<rect x="13" y="640" width="1633" height="3" fill="#ffffff"/>
<rect x="13" y="670" width="1633" height="3" fill="#0000ff"/>
<rect x="13" y="715" width="1633" height="1" fill="#0000ff"/>
<line x1="13" x2="1646" y1="719.5" y2="719.5" stroke="#008000" stroke-width="1" stroke-dasharray="3 3"/>
<rect x="13" y="778" width="1633" height="1" fill="#0000ff"/>
<rect x="13" y="797" width="1633" height="3" fill="#008000"/>
<rect x="13" y="855" width="1633" height="5" fill="#8a2be2"/>
</g>
<g clip-path="url(#cs)">
<rect x="14" y="898" width="1632" height="2" fill="#ff0000"/>
<rect x="14" y="936" width="1632" height="2" fill="#ff0000"/>
<polyline points="13.0,918.2 21.2,909.5 32.5,903.2 45.0,899.0 57.5,893.2 67.5,890.8 82.5,891.5 92.5,899.5 102.5,909.5 110.0,918.2 117.0,930.8 125.0,930.8 132.5,925.8 140.0,920.8 150.0,910.8 157.5,904.5 165.0,910.8 172.5,920.8 180.0,929.5 187.5,935.8 195.0,939.0 198.8,939.0 205.0,934.0 215.0,930.0 225.0,925.0 232.5,922.0 240.0,920.8 252.5,920.0 262.5,914.5 275.0,910.0 287.5,904.5 295.0,903.8 302.5,904.5 310.0,909.0 320.0,912.0 325.0,919.5 335.0,923.2 345.0,928.2 355.0,934.5 365.0,935.8 372.5,937.5 380.0,933.2 387.5,932.5 395.0,928.2 402.5,919.5 412.5,907.0 424.0,899.5 430.2,894.0 436.5,894.5 449.0,895.0 461.5,894.5 474.0,891.5 484.0,890.0 494.0,891.5 506.5,894.0 516.5,897.0 524.0,900.8 534.0,901.5 544.0,901.5 554.0,897.5 564.0,893.2 579.0,890.0 594.0,887.5 604.0,887.5 614.0,890.8 629.0,895.0 644.0,895.8 656.5,899.0 664.0,902.5 671.5,908.2 681.5,918.2 691.5,928.2 699.0,935.0 709.0,935.0 719.0,935.8 729.0,939.0 739.0,939.0 749.0,939.5 759.0,937.5 769.0,935.8 779.0,934.5 789.0,935.8 799.0,939.0 811.5,939.5 824.0,939.0 834.0,935.8 837.8,934.5 841.5,922.0 845.2,909.5 848.0,905.8 853.0,898.2 860.5,893.2 873.0,892.0 883.0,890.8 893.0,892.0 900.5,897.0 910.5,904.5 920.5,912.0 933.0,919.5 940.5,920.8 953.0,927.0 963.0,934.5 973.0,943.2 981.8,952.5 995.5,952.5 1008.0,950.8 1023.0,947.0 1035.5,944.0 1048.0,943.2 1060.5,948.2 1073.0,950.8 1088.0,950.8 1100.5,950.0 1110.5,948.2 1123.0,948.2 1135.5,947.0 1148.0,945.0 1156.8,939.5 1163.0,932.0 1173.0,923.2 1185.5,913.2 1195.5,907.0 1203.0,907.5 1213.0,914.5 1223.0,915.8 1235.5,922.0 1248.0,923.2 1260.5,925.8 1272.0,927.5 1278.2,920.8 1285.8,911.5 1297.0,907.0 1308.2,900.8 1319.5,901.5 1327.0,902.5 1334.5,899.0 1340.8,896.5 1347.0,902.0 1357.0,912.0 1367.0,920.8 1374.5,929.5 1380.8,935.0 1389.5,934.5 1397.0,937.5 1405.8,944.0 1414.5,944.5 1422.0,947.5 1432.0,949.0 1442.0,947.0 1452.0,944.0 1462.0,942.5 1469.5,942.0" fill="none" stroke="#00ff7f" stroke-width="2" stroke-linejoin="round"/>
<polyline points="13.0,924.5 25.0,913.2 37.5,905.8 50.0,899.5 62.5,894.0 75.0,892.0 87.5,893.2 97.5,899.5 107.5,907.0 117.5,919.5 127.5,927.5 135.0,929.0 142.5,924.5 150.0,918.2 160.0,910.0 167.5,909.5 173.8,912.0 182.5,922.0 190.0,929.5 200.0,935.8 212.5,935.8 225.0,929.5 237.5,923.2 250.0,920.8 262.5,918.2 275.0,913.2 287.5,908.2 297.5,904.5 307.5,905.0 317.5,909.0 327.5,915.8 340.0,923.2 350.0,928.2 360.0,932.0 370.0,934.5 380.0,935.8 390.0,935.0 400.0,928.2 410.0,919.5 420.0,908.2 424.0,904.5 431.5,898.2 439.0,896.5 451.5,895.8 464.0,895.0 476.5,893.2 489.0,891.5 501.5,892.5 514.0,895.8 526.5,899.0 536.5,900.8 549.0,900.8 559.0,898.2 569.0,895.0 584.0,890.8 599.0,888.2 609.0,889.0 621.5,892.0 634.0,894.5 649.0,896.5 661.5,898.2 671.5,902.5 681.5,911.5 691.5,920.8 701.5,929.5 711.5,934.5 724.0,937.5 736.5,939.0 749.0,938.2 761.5,937.5 774.0,935.8 784.0,934.5 794.0,935.8 804.0,938.2 816.5,939.0 829.0,938.2 839.0,935.0 844.0,928.2 848.0,922.0 855.5,909.5 863.0,899.0 873.0,893.2 885.5,891.5 895.5,892.0 905.5,896.5 915.5,903.2 925.5,910.8 935.5,917.0 948.0,922.0 958.0,925.8 968.0,933.2 978.0,942.0 988.0,949.0 998.0,952.0 1010.5,951.5 1023.0,950.0 1035.5,946.5 1048.0,944.5 1058.0,945.0 1070.5,948.2 1083.0,950.0 1098.0,950.0 1110.5,949.0 1123.0,948.2 1135.5,947.5 1148.0,945.8 1158.0,942.5 1168.0,935.8 1178.0,926.5 1188.0,918.2 1198.0,910.8 1208.0,909.5 1218.0,912.0 1230.5,916.5 1243.0,920.0 1255.5,923.2 1272.0,925.8 1282.0,922.0 1292.0,914.5 1302.0,909.0 1312.0,904.5 1322.0,902.0 1334.5,901.5 1344.5,900.0 1357.0,904.5 1367.0,913.2 1377.0,923.2 1384.5,929.0 1394.5,934.0 1404.5,938.2 1414.5,943.2 1424.5,946.5 1434.5,947.5 1444.5,947.0 1454.5,945.0 1469.5,943.2" fill="none" stroke="#ffff00" stroke-width="2" stroke-linejoin="round"/>
</g>
<path d="M12.5 877.5 V81.5 H1646.5 V957.5" fill="none" stroke="#fff" stroke-width="1"/>
<path d="M12.5 877.5 H1646.5" fill="none" stroke="#fff" stroke-width="1"/>
<path d="M12.5 957.5 V879.5 H1646.5" fill="none" stroke="#fff" stroke-width="1"/>
<path d="M12.5 957.5 H1646.5" fill="none" stroke="#fff" stroke-width="1"/>
<rect x="1647" y="107" width="2" height="1" fill="#fff"/>
<text x="1651.9" y="110" fill="#fff" stroke="#fff" letter-spacing="-0.45">111.555</text>
<rect x="1647" y="139" width="2" height="1" fill="#fff"/>
<text x="1651.9" y="142" fill="#fff" stroke="#fff" letter-spacing="-0.45">111.265</text>
<rect x="1647" y="171" width="2" height="1" fill="#fff"/>
<text x="1651.9" y="174" fill="#fff" stroke="#fff" letter-spacing="-0.45">110.975</text>
<rect x="1647" y="203" width="2" height="1" fill="#fff"/>
<text x="1651.9" y="206" fill="#fff" stroke="#fff" letter-spacing="-0.45">110.680</text>
<rect x="1647" y="235" width="2" height="1" fill="#fff"/>
<text x="1651.9" y="238" fill="#fff" stroke="#fff" letter-spacing="-0.45">110.390</text>
<rect x="1647" y="267" width="2" height="1" fill="#fff"/>
<text x="1651.9" y="270" fill="#fff" stroke="#fff" letter-spacing="-0.45">110.100</text>
<rect x="1647" y="299" width="2" height="1" fill="#fff"/>
<text x="1651.9" y="302" fill="#fff" stroke="#fff" letter-spacing="-0.45">109.810</text>
<rect x="1647" y="331" width="2" height="1" fill="#fff"/>
<text x="1651.9" y="334" fill="#fff" stroke="#fff" letter-spacing="-0.45">109.520</text>
<rect x="1647" y="363" width="2" height="1" fill="#fff"/>
<text x="1651.9" y="366" fill="#fff" stroke="#fff" letter-spacing="-0.45">109.225</text>
<rect x="1647" y="395" width="2" height="1" fill="#fff"/>
<text x="1651.9" y="398" fill="#fff" stroke="#fff" letter-spacing="-0.45">108.935</text>
<rect x="1647" y="427" width="2" height="1" fill="#fff"/>
<text x="1651.9" y="430" fill="#fff" stroke="#fff" letter-spacing="-0.45">108.645</text>
<rect x="1647" y="459" width="2" height="1" fill="#fff"/>
<text x="1651.9" y="462" fill="#fff" stroke="#fff" letter-spacing="-0.45">108.355</text>
<rect x="1647" y="491" width="2" height="1" fill="#fff"/>
<text x="1651.9" y="494" fill="#fff" stroke="#fff" letter-spacing="-0.45">108.065</text>
<rect x="1647" y="523" width="2" height="1" fill="#fff"/>
<text x="1651.9" y="526" fill="#fff" stroke="#fff" letter-spacing="-0.45">107.770</text>
<rect x="1647" y="555" width="2" height="1" fill="#fff"/>
<text x="1651.9" y="558" fill="#fff" stroke="#fff" letter-spacing="-0.45">107.480</text>
<rect x="1647" y="587" width="2" height="1" fill="#fff"/>
<text x="1651.9" y="590" fill="#fff" stroke="#fff" letter-spacing="-0.45">107.190</text>
<rect x="1647" y="619" width="2" height="1" fill="#fff"/>
<text x="1651.9" y="622" fill="#fff" stroke="#fff" letter-spacing="-0.45">106.900</text>
<rect x="1647" y="651" width="2" height="1" fill="#fff"/>
<text x="1651.9" y="654" fill="#fff" stroke="#fff" letter-spacing="-0.45">106.610</text>
<rect x="1647" y="683" width="2" height="1" fill="#fff"/>
<text x="1651.9" y="686" fill="#fff" stroke="#fff" letter-spacing="-0.45">106.315</text>
<rect x="1647" y="715" width="2" height="1" fill="#fff"/>
<text x="1651.9" y="718" fill="#fff" stroke="#fff" letter-spacing="-0.45">106.025</text>
<rect x="1647" y="747" width="2" height="1" fill="#fff"/>
<text x="1651.9" y="750" fill="#fff" stroke="#fff" letter-spacing="-0.45">105.735</text>
<rect x="1647" y="779" width="2" height="1" fill="#fff"/>
<text x="1651.9" y="782" fill="#fff" stroke="#fff" letter-spacing="-0.45">105.445</text>
<rect x="1647" y="811" width="2" height="1" fill="#fff"/>
<text x="1651.9" y="814" fill="#fff" stroke="#fff" letter-spacing="-0.45">105.155</text>
<rect x="1647" y="843" width="2" height="1" fill="#fff"/>
<text x="1651.9" y="846" fill="#fff" stroke="#fff" letter-spacing="-0.45">104.865</text>
<rect x="1647" y="875" width="2" height="1" fill="#fff"/>
<text x="1651.9" y="878" fill="#fff" stroke="#fff" letter-spacing="-0.45">104.570</text>
<rect x="1648" y="342" width="38" height="11" fill="#ff0000"/>
<text x="1651.9" y="351" fill="#4a0000" stroke="#4a0000" letter-spacing="-0.45">109.370</text>
<rect x="1648" y="709" width="38" height="11" fill="#0000ff"/>
<text x="1651.9" y="718" fill="#00004a" stroke="#00004a" letter-spacing="-0.45">106.030</text>
<rect x="1648" y="107" width="38" height="11" fill="#ff0000"/>
<text x="1651.9" y="116" fill="#4a0000" stroke="#4a0000" letter-spacing="-0.45">111.500</text>
<rect x="1648" y="156" width="38" height="11" fill="#ff0000"/>
<text x="1651.9" y="165" fill="#4a0000" stroke="#4a0000" letter-spacing="-0.45">111.060</text>
<rect x="1648" y="249" width="38" height="11" fill="#ff0000"/>
<text x="1651.9" y="258" fill="#4a0000" stroke="#4a0000" letter-spacing="-0.45">110.210</text>
<rect x="1648" y="263" width="38" height="11" fill="#ff0000"/>
<text x="1651.9" y="272" fill="#4a0000" stroke="#4a0000" letter-spacing="-0.45">110.080</text>
<rect x="1648" y="337" width="38" height="11" fill="#ff0000"/>
<text x="1651.9" y="346" fill="#4a0000" stroke="#4a0000" letter-spacing="-0.45">109.410</text>
<rect x="1648" y="400" width="38" height="11" fill="#ff0000"/>
<text x="1651.9" y="409" fill="#4a0000" stroke="#4a0000" letter-spacing="-0.45">108.840</text>
<rect x="1648" y="421" width="38" height="11" fill="#ff0000"/>
<text x="1651.9" y="430" fill="#4a0000" stroke="#4a0000" letter-spacing="-0.45">108.650</text>
<rect x="1648" y="479" width="38" height="11" fill="#8a2be2"/>
<text x="1651.9" y="488" fill="#1a0030" stroke="#1a0030" letter-spacing="-0.45">108.120</text>
<rect x="1648" y="527" width="38" height="11" fill="#ff0000"/>
<text x="1651.9" y="536" fill="#4a0000" stroke="#4a0000" letter-spacing="-0.45">107.680</text>
<rect x="1648" y="558" width="38" height="11" fill="#0000ff"/>
<text x="1651.9" y="567" fill="#00004a" stroke="#00004a" letter-spacing="-0.45">107.400</text>
<rect x="1648" y="621" width="38" height="11" fill="#0000ff"/>
<text x="1651.9" y="630" fill="#00004a" stroke="#00004a" letter-spacing="-0.45">106.830</text>
<rect x="1648" y="635" width="38" height="11" fill="#ffffff"/>
<text x="1651.9" y="644" fill="#000000" stroke="#000000" letter-spacing="-0.45">106.700</text>
<rect x="1648" y="665" width="38" height="11" fill="#0000ff"/>
<text x="1651.9" y="674" fill="#00004a" stroke="#00004a" letter-spacing="-0.45">106.430</text>
<rect x="1648" y="713" width="38" height="11" fill="#008000"/>
<text x="1651.9" y="722" fill="#001c00" stroke="#001c00" letter-spacing="-0.45">105.990</text>
<rect x="1648" y="772" width="38" height="11" fill="#0000ff"/>
<text x="1651.9" y="781" fill="#00004a" stroke="#00004a" letter-spacing="-0.45">105.460</text>
<rect x="1648" y="792" width="38" height="11" fill="#008000"/>
<text x="1651.9" y="801" fill="#001c00" stroke="#001c00" letter-spacing="-0.45">105.270</text>
<rect x="1648" y="851" width="38" height="11" fill="#8a2be2"/>
<text x="1651.9" y="860" fill="#1a0030" stroke="#1a0030" letter-spacing="-0.45">104.740</text>
<rect x="1647" y="881" width="1" height="1" fill="#fff"/><rect x="1647" y="955" width="1" height="1" fill="#fff"/>
<text x="1650" y="890" fill="#fff" stroke="#fff">100</text>
<text x="1650" y="954" fill="#fff" stroke="#fff">0</text>
<rect x="1648" y="893" width="12" height="11" fill="#ff0000"/><text x="1649.2" y="902" fill="#2a0000" stroke="#2a0000">75</text>
<rect x="1648" y="931" width="12" height="11" fill="#ff0000"/><text x="1649.2" y="940" fill="#2a0000" stroke="#2a0000">25</text>
<rect x="13" y="958" width="1" height="3" fill="#fff"/>
<text x="12" y="970" fill="#fff" stroke="#fff">24 Oct 2011</text>
<rect x="77" y="958" width="1" height="3" fill="#fff"/>
<text x="76" y="970" fill="#fff" stroke="#fff">25 Oct 04:00</text>
<rect x="141" y="958" width="1" height="3" fill="#fff"/>
<text x="140" y="970" fill="#fff" stroke="#fff">25 Oct 12:00</text>
<rect x="205" y="958" width="1" height="3" fill="#fff"/>
<text x="204" y="970" fill="#fff" stroke="#fff">25 Oct 20:00</text>
<rect x="269" y="958" width="1" height="3" fill="#fff"/>
<text x="268" y="970" fill="#fff" stroke="#fff">26 Oct 04:00</text>
<rect x="333" y="958" width="1" height="3" fill="#fff"/>
<text x="332" y="970" fill="#fff" stroke="#fff">26 Oct 12:00</text>
<rect x="397" y="958" width="1" height="3" fill="#fff"/>
<text x="396" y="970" fill="#fff" stroke="#fff">26 Oct 20:00</text>
<rect x="461" y="958" width="1" height="3" fill="#fff"/>
<text x="460" y="970" fill="#fff" stroke="#fff">27 Oct 04:00</text>
<rect x="525" y="958" width="1" height="3" fill="#fff"/>
<text x="524" y="970" fill="#fff" stroke="#fff">27 Oct 12:00</text>
<rect x="589" y="958" width="1" height="3" fill="#fff"/>
<text x="588" y="970" fill="#fff" stroke="#fff">27 Oct 20:00</text>
<rect x="653" y="958" width="1" height="3" fill="#fff"/>
<text x="652" y="970" fill="#fff" stroke="#fff">28 Oct 04:00</text>
<rect x="717" y="958" width="1" height="3" fill="#fff"/>
<text x="716" y="970" fill="#fff" stroke="#fff">28 Oct 12:00</text>
<rect x="781" y="958" width="1" height="3" fill="#fff"/>
<text x="780" y="970" fill="#fff" stroke="#fff">28 Oct 20:00</text>
<rect x="845" y="958" width="1" height="3" fill="#fff"/>
<text x="844" y="970" fill="#fff" stroke="#fff">31 Oct 04:00</text>
<rect x="909" y="958" width="1" height="3" fill="#fff"/>
<text x="908" y="970" fill="#fff" stroke="#fff">31 Oct 12:00</text>
<rect x="973" y="958" width="1" height="3" fill="#fff"/>
<text x="972" y="970" fill="#fff" stroke="#fff">31 Oct 20:00</text>
<rect x="1037" y="958" width="1" height="3" fill="#fff"/>
<text x="1036" y="970" fill="#fff" stroke="#fff">1 Nov 04:00</text>
<rect x="1101" y="958" width="1" height="3" fill="#fff"/>
<text x="1100" y="970" fill="#fff" stroke="#fff">1 Nov 12:00</text>
<rect x="1165" y="958" width="1" height="3" fill="#fff"/>
<text x="1164" y="970" fill="#fff" stroke="#fff">1 Nov 20:00</text>
<rect x="1229" y="958" width="1" height="3" fill="#fff"/>
<text x="1228" y="970" fill="#fff" stroke="#fff">2 Nov 04:00</text>
<rect x="1293" y="958" width="1" height="3" fill="#fff"/>
<text x="1292" y="970" fill="#fff" stroke="#fff">2 Nov 12:00</text>
<rect x="1357" y="958" width="1" height="3" fill="#fff"/>
<text x="1356" y="970" fill="#fff" stroke="#fff">2 Nov 20:00</text>
<rect x="1421" y="958" width="1" height="3" fill="#fff"/>
<text x="1420" y="970" fill="#fff" stroke="#fff">3 Nov 04:00</text>
<text x="17" y="893" fill="#fff" stroke="#fff" letter-spacing="-0.33">Stoch(13,3,5) 19.1848 18.6483</text>
<path d="M1477 82 h9.4 l-4.7 5.2 z" fill="#778899" shape-rendering="auto"/></svg>
<div class="abs" id="menubar"></div><div class="abs" id="mline1"></div><div class="abs" id="mline2"></div>
<div class="abs" id="toolbar"></div><div class="abs" id="tbshadow"></div>
<div class="abs" id="ledge"></div><div class="abs" id="redge"></div>
<div class="abs" id="tabbar"></div><div class="abs" id="tabtop"></div><div class="abs" id="tabhi"></div><div class="abs" id="status"></div>
<span class="tt mn" id="t0" style="left:36.50px;top:33.5px;transform:scaleX(0.8426);">File</span>
<span class="tt mn" id="t1" style="left:70.00px;top:33.5px;transform:scaleX(0.9617);">View</span>
<span class="tt mn" id="t2" style="left:111.50px;top:33.5px;transform:scaleX(0.8978);">Insert</span>
<span class="tt mn" id="t3" style="left:154.50px;top:33.5px;transform:scaleX(0.9437);">Charts</span>
<span class="tt mn" id="t4" style="left:203.00px;top:33.5px;transform:scaleX(1.0000);">Tools</span>
<span class="tt mn" id="t5" style="left:247.00px;top:33.5px;transform:scaleX(1.0003);">Window</span>
<span class="tt mn" id="t6" style="left:304.00px;top:33.5px;transform:scaleX(0.9591);">Help</span>
<div class="wb" style="left:1631px"></div><div class="wb" style="left:1650px"></div><div class="wb" style="left:1669px"></div>
<svg class="ic" style="left:1631px;top:31px" width="56" height="18" viewBox="0 0 56 18"><rect x="5" y="11" width="6" height="2" fill="#64707f"/><path d="M26.5 5.5h5v4" fill="none" stroke="#64707f" stroke-width="1.6"/><rect x="24" y="8" width="5.5" height="4.5" fill="none" stroke="#64707f" stroke-width="1.6"/><path d="M44 6l6 6M50 6l-6 6" stroke="#64707f" stroke-width="2"/></svg>
<div class="grip" style="left:11px;top:55px"></div>
<div class="grip" style="left:475px;top:55px"></div>
<div class="grip" style="left:824px;top:55px"></div>
<div class="grip" style="left:1157px;top:55px"></div>
<div class="sep" style="left:92px;top:54px;height:21px"></div>
<div class="sep" style="left:238px;top:54px;height:21px"></div>
<div class="sep" style="left:566px;top:54px;height:21px"></div>
<div class="sep" style="left:628px;top:54px;height:21px"></div>
<div class="sep" style="left:690px;top:54px;height:21px"></div>
<div class="sep" style="left:887px;top:54px;height:21px"></div>
<div class="sep" style="left:471px;top:52px;height:25px"></div><div class="sepw" style="left:472px;top:52px;height:25px"></div>
<div class="sep" style="left:805px;top:52px;height:25px"></div><div class="sepw" style="left:806px;top:52px;height:25px"></div>
<div class="sep" style="left:820px;top:52px;height:25px"></div><div class="sepw" style="left:821px;top:52px;height:25px"></div>
<div class="sep" style="left:1124px;top:52px;height:25px"></div><div class="sepw" style="left:1125px;top:52px;height:25px"></div>
<div class="sep" style="left:1153px;top:52px;height:25px"></div><div class="sepw" style="left:1154px;top:52px;height:25px"></div>
<div class="sep" style="left:1414px;top:52px;height:25px"></div><div class="sepw" style="left:1415px;top:52px;height:25px"></div>
<div class="pressed" style="left:359px;top:53px;width:109px;height:23px"></div>
<div class="pressed" style="left:509px;top:53px;width:25px;height:23px"></div>
<div class="pressed" style="left:633px;top:53px;width:25px;height:23px"></div>
<div class="pressed" style="left:661px;top:53px;width:25px;height:23px"></div>
<div class="pressed" style="left:830px;top:53px;width:25px;height:23px"></div>
<div class="pressed" style="left:1275px;top:53px;width:25px;height:23px"></div>
<div class="dd" style="left:41.5px;top:64px"></div>
<div class="dd" style="left:78.5px;top:64px"></div>
<div class="dd" style="left:719.5px;top:64px"></div>
<div class="dd" style="left:756.5px;top:64px"></div>
<div class="dd" style="left:793.4px;top:64px"></div>
<div class="dd" style="left:1112.6px;top:64px"></div>
<span class="tt tb" id="t7" style="left:269.50px;top:59px;transform:scaleX(1.0342);">New Order</span>
<span class="tt tb" id="t8" style="left:385.50px;top:59px;transform:scaleX(1.0118);">Expert Advisors</span>
<span class="tt per" id="t9" style="left:1169.00px;top:59px;transform:scaleX(0.9308);">M1</span>
<span class="tt per" id="t10" style="left:1196.50px;top:59px;transform:scaleX(0.9334);">M5</span>
<span class="tt per" id="t11" style="left:1222.50px;top:59px;transform:scaleX(0.9514);">M15</span>
<span class="tt per" id="t12" style="left:1250.00px;top:59px;transform:scaleX(0.9526);">M30</span>
<span class="tt per" id="t13" style="left:1281.50px;top:59px;transform:scaleX(0.9346);">H1</span>
<span class="tt per" id="t14" style="left:1308.50px;top:59px;transform:scaleX(1.0161);">H4</span>
<span class="tt per" id="t15" style="left:1337.50px;top:59px;transform:scaleX(0.9346);">D1</span>
<span class="tt per" id="t16" style="left:1365.00px;top:59px;transform:scaleX(1.0000);">W1</span>
<span class="tt per" id="t17" style="left:1392.00px;top:59px;transform:scaleX(0.9400);">MN</span>
<svg class="ic" style="left:0;top:0" width="1696" height="100" viewBox="0 0 1696 100">
<defs><radialGradient id="gplus" cx="50%" cy="50%" r="65%"><stop offset="0" stop-color="#8cff8c"/><stop offset="0.5" stop-color="#22ee22"/><stop offset="1" stop-color="#10c010"/></radialGradient><linearGradient id="gfold" x1="0" y1="0" x2="0" y2="1"><stop offset="0" stop-color="#fffbd0"/><stop offset="0.6" stop-color="#ffe070"/><stop offset="1" stop-color="#ffc890"/></linearGradient><linearGradient id="gdia" x1="0" y1="0" x2="0" y2="1"><stop offset="0" stop-color="#fff2a8"/><stop offset="0.45" stop-color="#ffd27a"/><stop offset="0.5" stop-color="#ffad5c"/><stop offset="0.7" stop-color="#ffc060"/><stop offset="1" stop-color="#fff088"/></linearGradient><linearGradient id="gclk" x1="0" y1="0" x2="0" y2="1"><stop offset="0" stop-color="#5aa8f0"/><stop offset="1" stop-color="#0a50b0"/></linearGradient><linearGradient id="gnav" x1="0" y1="0" x2="0" y2="1"><stop offset="0" stop-color="#9cc8f4"/><stop offset="1" stop-color="#2a6cc0"/></linearGradient></defs>
<rect x="12" y="31" width="17" height="17" fill="#f5f5f5"/>
<rect x="13.5" y="32.7" width="11" height="8.5" fill="#fff" stroke="#5b8ff0" stroke-width="1.2"/>
<path d="M13.5 32.7h11" stroke="#fff" stroke-width="1.2" stroke-dasharray="0.7 1.5"/>
<path d="M15.2 36.4h2.2l0.9-1.6 1.2 2.4 0.8-0.8h2.2" fill="none" stroke="#5b8ff0" stroke-width="1"/>
<rect x="16.7" y="38.2" width="10.3" height="7.6" fill="#fff" stroke="#5b8ff0" stroke-width="1.2"/>
<path d="M16.7 38.2h10.3M16.7 45.8h10.3" stroke="#fff" stroke-width="1.2" stroke-dasharray="0.7 1.5"/>
<path d="M18.3 41l1.2 2.6 1.4-2.8 1.4 2.8 1.4-2.8 1.2 2.6" fill="none" stroke="#5b8ff0" stroke-width="1"/>
<rect x="20.5" y="57.7" width="12" height="10" rx="1" fill="#fff" stroke="#3c7fc4" stroke-width="1.3"/><rect x="20.5" y="57.5" width="12" height="1.6" fill="#3c7fc4"/>
<path d="M23.5 60.3v6M22 61.8l1.5-1.7 1.5 1.7M22 64.8l1.5 1.7 1.5-1.7" stroke="#7a9cc0" stroke-width="1" fill="none"/>
<path d="M29.0 60h4v4.0h4.0v4h-4.0v4.0h-4v-4.0h-4.0v-4h4.0z" fill="#0a8c0a"/><path d="M30.0 61h2v4.0h4.0v2h-4.0v4.0h-2v-4.0h-4.0v-2h4.0z" fill="url(#gplus)"/>
<rect x="60.5" y="62.7" width="13" height="10" rx="1" fill="#fff" stroke="#3c7fc4" stroke-width="1.3"/>
<path d="M63 69.5h8.5M64.5 68l-1.6 1.5 1.6 1.5M70 68l1.6 1.5-1.6 1.5" stroke="#7a9cc0" stroke-width="1" fill="none"/>
<rect x="57.5" y="57.7" width="13" height="10" rx="1" fill="#fff" stroke="#3c7fc4" stroke-width="1.3"/><rect x="57.5" y="57.5" width="13" height="1.6" fill="#3c7fc4"/>
<path d="M60.5 60.3v5M59 61.8l1.5-1.7 1.5 1.7M60.5 65.3h7.5M66.5 63.8l1.6 1.5-1.6 1.5" stroke="#7a9cc0" stroke-width="1" fill="none"/>
<rect x="101.8" y="57.7" width="14.6" height="14.8" rx="1.5" fill="#fff" stroke="#5b9bd5" stroke-width="1.5"/><rect x="102" y="57.3" width="14.2" height="1.4" fill="#5b9bd5"/>
<path d="M104 60.5h9M111 62.5h3M104 66.5h3M104 68.5h3M104 70.5h9" stroke="#e4e4ea" stroke-width="0.8"/>
<path d="M106.5 60l3.6 3.4h-2v2.6h-3.2v-2.6h-2z" fill="#34e04a" stroke="#0a8a0a" stroke-width="0.9" stroke-linejoin="round"/>
<path d="M110.5 71.2l3.6-3.4h-2v-2.6h-3.2v2.6h-2z" fill="#ffbc8a" stroke="#e0481a" stroke-width="0.9" stroke-linejoin="round"/>
<circle cx="137.5" cy="65.4" r="5.3" fill="none" stroke="#555" stroke-width="1.3"/><path d="M137.5 58v5.4M137.5 67.4v5.6M130 65.4h5.5M139.5 65.4h5.6" stroke="#555" stroke-width="1.3"/>
<path d="M156.5 66.3v-7.6q0-1 1-1h3.4q0.8 0 1.2 0.8l0.6 1h4.2q1 0 1 1v5.8z" fill="url(#gfold)" stroke="#c9a227" stroke-width="1"/>
<path d="M168 60.6l1.9 4 4.3 0.5-3.2 3 0.9 4.3-3.9-2.2-3.9 2.2 0.9-4.3-3.2-3 4.3-0.5z" fill="#f5c27a" stroke="#c9961e" stroke-width="1" stroke-linejoin="round"/>
<path d="M168 63.2l1 2.4 2.2 0.3-1.6 1.6 0.4 2.2-2-1.1z" fill="#ffe9a8"/>
<rect x="159.8" y="68" width="1.2" height="1.2" fill="#222"/><rect x="159.8" y="70" width="1.2" height="1.2" fill="#222"/><rect x="159.8" y="72" width="1.2" height="1.2" fill="#222"/>
<rect x="186" y="58.8" width="14.2" height="12.4" rx="1.2" fill="#fff" stroke="#3a7bc0" stroke-width="1.7"/>
<rect x="186.6" y="59.4" width="2.6" height="11.2" fill="url(#gnav)"/><rect x="187.2" y="66" width="1.2" height="4" fill="#4a4a5a"/>
<path d="M192 60.5h7M192 62.5h7M192 64.5h7M192 66.5h7" stroke="#cfdcf8" stroke-width="0.9"/>
<circle cx="187.8" cy="60.5" r="0.8" fill="#000"/><circle cx="190.5" cy="60.5" r="0.8" fill="#f00"/><circle cx="190.5" cy="62.5" r="0.8" fill="#063"/><circle cx="190.5" cy="64.5" r="0.8" fill="#063"/><circle cx="190.5" cy="66.5" r="0.8" fill="#f00"/>
<rect x="213.6" y="57.7" width="12" height="13" rx="1" fill="#fff" stroke="#b5ad98" stroke-width="1.1"/>
<path d="M216.5 59.5v6M215.5 64h2M222.5 59.5v5M222.5 60.5h1.5" stroke="#777" stroke-width="1"/>
<path d="M225 70l5 4.2" stroke="#c49a1a" stroke-width="2.6"/>
<circle cx="221.3" cy="66.3" r="5" fill="#dcebf8" fill-opacity="0.9" stroke="#5a96d8" stroke-width="1.2" stroke-dasharray="1.8 0.9"/>
<rect x="219.8" y="63.8" width="2.6" height="5" fill="#a8b0b8"/>
<path d="M249.2 57.2h7l4 4v8.6q0 1 -1 1h-10q-1 0 -1 -1v-11.6q0 -1 1 -1z" fill="#fff" stroke="#6a6a6a" stroke-width="1.1"/><path d="M256.2 57.2v4h4" fill="#e8e8e8" stroke="#6a6a6a" stroke-width="0.9"/>
<rect x="250" y="59" width="2.6" height="1.4" fill="#888"/><path d="M250 63h6M250 65.2h4M250 67.4h3" stroke="#777" stroke-width="1"/>
<path d="M256.0 63h4v4.0h4.0v4h-4.0v4.0h-4v-4.0h-4.0v-4h4.0z" fill="#0a8c0a"/><path d="M257.0 64h2v4.0h4.0v2h-4.0v4.0h-2v-4.0h-4.0v-2h4.0z" fill="url(#gplus)"/>
<path d="M342.4 57.3l7.2 7.6-7.2 7.8-7.2-7.8z" fill="url(#gdia)" stroke="#cfa020" stroke-width="1.4" stroke-linejoin="round"/>
<path d="M342.4 60.6v5.6M342.4 67.4v1.6" stroke="#7a0c00" stroke-width="1.5"/>
<path d="M364.4 63.2h12.8q0.6 0 0.3 0.8l-3.6 7.2q-0.5 1.4-1.6 1.6l-2 0.2q-1.2 0-1.8-1l-4.6-8q-0.3-0.8 0.5-0.8z" fill="#ffb878" stroke="#d09a20" stroke-width="1"/>
<path d="M365 64h12l-1.6 3.2h-8.6z" fill="#ff9e5a"/><path d="M367.6 68.6l2.6 3.6h-1.4l-2.6-3.6z" fill="#ffe890"/>
<ellipse cx="370.3" cy="62.2" rx="8.4" ry="2.3" fill="#4a8fd8" stroke="#3878c4" stroke-width="0.5"/>
<path d="M365.8 62q0.2-3.6 2-4.4q2.4-0.8 5 0q1.8 0.8 2 4.4q-4.5 1.4-9 0z" fill="#5a9ee2" stroke="#3878c4" stroke-width="0.5"/>
<path d="M367 60.4q0.4-2 1.6-2.4q1.6-0.5 3.2-0.2q-2.8 0.4-3.4 2.8z" fill="#b4d8f8"/>
<path d="M363.2 62.6q3.4 1.8 7.1 1.8q3.7 0 7.1-1.8" fill="none" stroke="#2c68b4" stroke-width="0.7"/>
<circle cx="375" cy="68.9" r="4.2" fill="#12b012" stroke="#0a8a0a" stroke-width="0.8"/><path d="M373.6 66.4l3.6 2.5-3.6 2.5z" fill="#fff"/>
<path d="M489.5 59.5V73M487.0 70.5H500.5" stroke="#505050" stroke-width="1.2" fill="none"/><path d="M487.3 61.5L489.5 58.6L491.7 61.5zM498.5 68.3L501.4 70.5L498.5 72.7z" fill="#505050"/>
<path d="M495.6 60.2v8.6M495.6 61.7h2.6M493 67.3h2.6" stroke="#0a8a0a" stroke-width="1.4" fill="none"/>
<path d="M517.5 59.5V73M515.0 70.5H528.5" stroke="#505050" stroke-width="1.2" fill="none"/><path d="M515.3 61.5L517.5 58.6L519.7 61.5zM526.5 68.3L529.4 70.5L526.5 72.7z" fill="#505050"/>
<path d="M523.5 57.2v11.8" stroke="#0a8a0a" stroke-width="1.3"/><rect x="521.6" y="59.4" width="3.9" height="7.2" fill="#46f26a" stroke="#0a8a0a" stroke-width="1.1"/>
<path d="M545.5 59.5V73M543.0 70.5H556.5" stroke="#505050" stroke-width="1.2" fill="none"/><path d="M543.3 61.5L545.5 58.6L547.7 61.5zM554.5 68.3L557.4 70.5L554.5 72.7z" fill="#505050"/>
<path d="M544.2 67.6q3.4-2.6 4.8-4.4q1.2-1.2 2.4-0.6" stroke="#0a8a0a" stroke-width="1.3" fill="none"/><path d="M551.4 62.6q2.2 1.6 4.2 3.4" stroke="#555" stroke-width="1.3" fill="none"/>
<path d="M585.3000000000001 67.1L590.3000000000001 72.1" stroke="#c49a1a" stroke-width="3.2" stroke-linecap="butt"/><path d="M585.7 66.7L590.5 71.5" stroke="#f0d060" stroke-width="1"/><circle cx="581.1" cy="62.9" r="5.7" fill="#e2f3fb" stroke="#3a80d0" stroke-width="1.4"/><path d="M578.1 62.9h6" stroke="#5872b4" stroke-width="1.6"/><path d="M581.1 59.9v6" stroke="#5872b4" stroke-width="1.6"/>
<path d="M613.2 67.1L618.2 72.1" stroke="#c49a1a" stroke-width="3.2" stroke-linecap="butt"/><path d="M613.6 66.7L618.4 71.5" stroke="#f0d060" stroke-width="1"/><circle cx="609.0" cy="62.9" r="5.7" fill="#e2f3fb" stroke="#3a80d0" stroke-width="1.4"/><path d="M606.0 62.9h6" stroke="#5872b4" stroke-width="1.6"/>
<path d="M641.5 59.5V73M639.0 70.5H652.5" stroke="#505050" stroke-width="1.2" fill="none"/><path d="M639.3 61.5L641.5 58.6L643.7 61.5zM650.5 68.3L653.4 70.5L650.5 72.7z" fill="#505050"/>
<path d="M646.4 61.4l3.6 3.1-3.6 3.1z" fill="#7dff7d" stroke="#0a9c0a" stroke-width="1" stroke-linejoin="round"/>
<path d="M669.5 59.5V73M667.0 70.5H680.5" stroke="#505050" stroke-width="1.2" fill="none"/><path d="M667.3 61.5L669.5 58.6L671.7 61.5zM678.5 68.3L681.4 70.5L678.5 72.7z" fill="#505050"/>
<path d="M675.5 59v10" stroke="#1878a8" stroke-width="1.4"/><path d="M676.6 64.4l2.8-2.4v1.8h1.8v1.2h-1.8v1.8z" fill="#d84a10" stroke="#d84a10" stroke-width="0.4"/>
<path d="M701.2 57.2h7l4 4v8.6q0 1 -1 1h-10q-1 0 -1 -1v-11.6q0 -1 1 -1z" fill="#fff" stroke="#6a6a6a" stroke-width="1.1"/><path d="M708.2 57.2v4h4" fill="#e8e8e8" stroke="#6a6a6a" stroke-width="0.9"/>
<path d="M705.4 60.4q-1.8-0.3-2 1.6v6.2q0 1.6-1 1.6M701.8 63.8h3" stroke="#7a1a7a" stroke-width="1.1" fill="none"/>
<path d="M708.0 63h4v4.0h4.0v4h-4.0v4.0h-4v-4.0h-4.0v-4h4.0z" fill="#0a8c0a"/><path d="M709.0 64h2v4.0h4.0v2h-4.0v4.0h-2v-4.0h-4.0v-2h4.0z" fill="url(#gplus)"/>
<circle cx="744" cy="64.9" r="6.9" fill="#f4f6f8" stroke="url(#gclk)" stroke-width="2.1"/>
<path d="M744 61v4l2.4 0.6" stroke="#402060" stroke-width="1.1" fill="none"/><path d="M743 68.6h2" stroke="#7ac0f0" stroke-width="1"/>
<g fill="#9aa"><circle cx="749.0" cy="64.9" r="0.35"/><circle cx="748.3" cy="67.4" r="0.35"/><circle cx="746.5" cy="69.2" r="0.35"/><circle cx="744.0" cy="69.9" r="0.35"/><circle cx="741.5" cy="69.2" r="0.35"/><circle cx="739.7" cy="67.4" r="0.35"/><circle cx="739.0" cy="64.9" r="0.35"/><circle cx="739.7" cy="62.4" r="0.35"/><circle cx="741.5" cy="60.6" r="0.35"/><circle cx="744.0" cy="59.9" r="0.35"/><circle cx="746.5" cy="60.6" r="0.35"/><circle cx="748.3" cy="62.4" r="0.35"/></g>
<rect x="773.9" y="58.6" width="14.4" height="12.6" rx="1.2" fill="#fff" stroke="#3a7bc0" stroke-width="1.5"/><rect x="773.6" y="57.9" width="15" height="2.6" rx="1" fill="#3a7bc0"/><path d="M775 59h6" stroke="#bcd8f6" stroke-width="0.9"/>
<path d="M774.5 66.1h13.2" stroke="#9cc0ea" stroke-width="0.9"/>
<path d="M775.4 64.5h1.6l1.6-1.4h1l1.4-0.8h1l0.8 1.2h1.6l1.4-1.2h1.2" stroke="#a02000" stroke-width="1.3" fill="none"/>
<path d="M776.2 69.6h1.4l1.4-1.2 1.6 1.2h1l2.2-2.2 1.6 1.6 1 1" stroke="#0a8a0a" stroke-width="1.3" fill="none"/>
<path d="M838 57.9v11l2.5-2.3 2.4 5.2 1.7-0.8-2.4-5.1 3.5-0.3z" fill="#555"/>
<path d="M870.5 58.5v5.7M870.5 66.6v5.8M863.5 65.5h5.8M871.7 65.5h5.8" stroke="#505050" stroke-width="1.1"/>
<path d="M904.6 59v13" stroke="#505050" stroke-width="1.2"/><path d="M927 65.4h12" stroke="#505050" stroke-width="1.2"/><path d="M955 72L967 60" stroke="#505050" stroke-width="1.2"/>
<path d="M980.8 66.4l8.4-7.4M982 71.2l12.4-11M986 71.6l9-8" stroke="#444" stroke-width="1"/>
<path d="M984.5 63.5l-1.5 6.5M987 61.5l-1.5 7M989.5 60l-1.5 7M992.5 57.5l-1.5 8" stroke="#444" stroke-width="0.9"/>
<text x="991.6" y="73.9" font-family="Liberation Sans,sans-serif" font-weight="bold" font-size="6.6" fill="#333">E</text>
<path d="M1010 58.5H1023.4" stroke="#444" stroke-width="1" stroke-dasharray="1 1"/>
<path d="M1010 61.5H1023.4" stroke="#444" stroke-width="1" stroke-dasharray="1 1"/>
<path d="M1010 65.5H1023.4" stroke="#444" stroke-width="1" stroke-dasharray="1 1"/>
<path d="M1010 69.6H1019.4" stroke="#444" stroke-width="1" stroke-dasharray="1 1"/>
<text x="1019.8" y="73.9" font-family="Liberation Sans,sans-serif" font-weight="bold" font-size="6.6" fill="#333">F</text>
<text x="1040.3" y="69.8" font-family="Liberation Sans,sans-serif" font-size="12.2" fill="#505050" stroke="#505050" stroke-width="0.3">A</text>
<rect x="1067.5" y="59.7" width="11" height="11.6" fill="none" stroke="#444" stroke-width="1" stroke-dasharray="1 1"/><rect x="1066.4" y="58.6" width="1.6" height="1.2" fill="#444"/>
<path d="M1069.4 62.6h7.4M1073.1 62.6v7.2" stroke="#505050" stroke-width="1.5" fill="none"/>
<path d="M1097.4 58.9l3.6 3.4h-2.1v1.2h-3v-1.2h-2.1z" fill="#505050"/><path d="M1104.6 72.2l3.6-3.4h-2.1v-1.2h-3v1.2h-2.1z" fill="#505050"/><path d="M1096.4 66.8l2.2 2.2 4.6-5.8" stroke="#505050" stroke-width="1.3" fill="none"/>
</svg>
<div class="abs" style="left:88px;top:977px;width:76px;height:19px;box-sizing:border-box;background:#fff;border:1px solid #000;border-top:none;box-shadow:1px 1px 0 #9a9a9a"></div>
<div class="sep" style="left:9px;top:978px;height:18px;background:#6a6a6a"></div>
<span class="tt tab" id="t18" style="left:22.00px;top:980px;transform:scaleX(0.9230);">EURJPY,H4</span>
<span class="tt tab" id="t19" style="left:98.00px;top:980px;transform:scaleX(0.9390);color:#000;">EURJPY,H1</span>
<span class="tt tab" id="t20" style="left:174.00px;top:980px;transform:scaleX(0.9315);">EURJPY,M15</span>
<span class="tt tab" id="t21" style="left:257.00px;top:980px;transform:scaleX(0.9392);">EURJPY,M1</span>
<span class="tt tab" id="t22" style="left:333.00px;top:980px;transform:scaleX(0.9392);">EURJPY,M1</span>
<span class="tt tab" id="t23" style="left:411.00px;top:980px;transform:scaleX(0.9551);">EURJPY,Weekly</span>
<span class="tt tab" id="t24" style="left:511.00px;top:980px;transform:scaleX(0.9349);">EURJPY,Daily</span>
<span class="tt tab" id="t25" style="left:599.00px;top:980px;transform:scaleX(0.9551);">EURJPY,Weekly</span>
<span class="tt tab" id="t26" style="left:699.00px;top:980px;transform:scaleX(0.9349);">EURJPY,Daily</span>
<span class="tt tab" id="t27" style="left:786.00px;top:980px;transform:scaleX(0.9230);">EURJPY,H4</span>
<span class="tt tab" id="t28" style="left:862.00px;top:980px;transform:scaleX(0.9381);">EURJPY,H1</span>
<span class="tt tab" id="t29" style="left:938.00px;top:980px;transform:scaleX(0.9315);">EURJPY,M30</span>
<span class="tt tab" id="t30" style="left:1021.00px;top:980px;transform:scaleX(0.9243);">EURJPY,M5</span>
<span class="tt tab" id="t31" style="left:1098.00px;top:980px;transform:scaleX(0.9315);">EURJPY,M15</span>
<span class="tt tab" id="t32" style="left:1181.00px;top:980px;transform:scaleX(0.9392);">EURJPY,M1</span>
<span class="tt tab" id="t33" style="left:1258.00px;top:980px;transform:scaleX(0.9381);">EURJPY,H1</span>
<div class="sep" style="left:248px;top:980px;height:14px;background:#6e6e6e"></div>
<div class="sep" style="left:324px;top:980px;height:14px;background:#6e6e6e"></div>
<div class="sep" style="left:400px;top:980px;height:14px;background:#6e6e6e"></div>
<div class="sep" style="left:500px;top:980px;height:14px;background:#6e6e6e"></div>
<div class="sep" style="left:588px;top:980px;height:14px;background:#6e6e6e"></div>
<div class="sep" style="left:688px;top:980px;height:14px;background:#6e6e6e"></div>
<div class="sep" style="left:776px;top:980px;height:14px;background:#6e6e6e"></div>
<div class="sep" style="left:852px;top:980px;height:14px;background:#6e6e6e"></div>
<div class="sep" style="left:928px;top:980px;height:14px;background:#6e6e6e"></div>
<div class="sep" style="left:1012px;top:980px;height:14px;background:#6e6e6e"></div>
<div class="sep" style="left:1088px;top:980px;height:14px;background:#6e6e6e"></div>
<div class="sep" style="left:1172px;top:980px;height:14px;background:#6e6e6e"></div>
<div class="sep" style="left:1248px;top:980px;height:14px;background:#6e6e6e"></div>
<div class="sep" style="left:1324px;top:980px;height:14px;background:#6e6e6e"></div>
<div class="abs" style="left:1659px;top:983px;width:0;height:0;border-top:4px solid transparent;border-bottom:4px solid transparent;border-right:4px solid #8c8c8c"></div>
<div class="abs" style="left:1677px;top:983px;width:0;height:0;border-top:4px solid transparent;border-bottom:4px solid transparent;border-left:4px solid #8c8c8c"></div>
<span class="tt st" id="t34" style="left:10.50px;top:1003px;transform:scaleX(0.9902);">For Help, press F1</span>
<span class="tt st" id="t35" style="left:968.00px;top:1003px;transform:scaleX(0.8643);">1-EURJPY</span>
<span class="tt st" id="t36" style="left:1597.00px;top:1003px;transform:scaleX(1.0188);">3235/5 kb</span>
<div class="sep" style="left:962px;top:1001px;height:16px"></div>
<div class="sep" style="left:1078px;top:1001px;height:16px"></div>
<div class="sep" style="left:1180px;top:1001px;height:16px"></div>
<div class="sep" style="left:1251px;top:1001px;height:16px"></div>
<div class="sep" style="left:1322px;top:1001px;height:16px"></div>
<div class="sep" style="left:1390px;top:1001px;height:16px"></div>
<div class="sep" style="left:1460px;top:1001px;height:16px"></div>
<div class="sep" style="left:1526px;top:1001px;height:16px"></div>
<svg class="ic" style="left:0;top:0" width="1696" height="1026" shape-rendering="crispEdges"><rect x="1532" y="1003" width="2" height="11.0" fill="#6b8e23"/><rect x="1532" y="1014.0" width="2" height="2.0" fill="#b22222"/><rect x="1535" y="1003" width="2" height="9.7" fill="#6b8e23"/><rect x="1535" y="1012.7" width="2" height="3.3" fill="#b22222"/><rect x="1538" y="1003" width="2" height="8.4" fill="#6b8e23"/><rect x="1538" y="1011.4" width="2" height="4.6" fill="#b22222"/><rect x="1541" y="1003" width="2" height="7.1" fill="#6b8e23"/><rect x="1541" y="1010.1" width="2" height="5.9" fill="#b22222"/><rect x="1544" y="1003" width="2" height="5.8" fill="#6b8e23"/><rect x="1544" y="1008.8" width="2" height="7.2" fill="#b22222"/><rect x="1547" y="1003" width="2" height="4.5" fill="#6b8e23"/><rect x="1547" y="1007.5" width="2" height="8.5" fill="#b22222"/><rect x="1550" y="1003" width="2" height="3.2" fill="#6b8e23"/><rect x="1550" y="1006.2" width="2" height="9.8" fill="#b22222"/><rect x="1553" y="1003" width="2" height="1.9" fill="#6b8e23"/><rect x="1553" y="1004.9" width="2" height="11.1" fill="#b22222"/></svg>
</body></html>
